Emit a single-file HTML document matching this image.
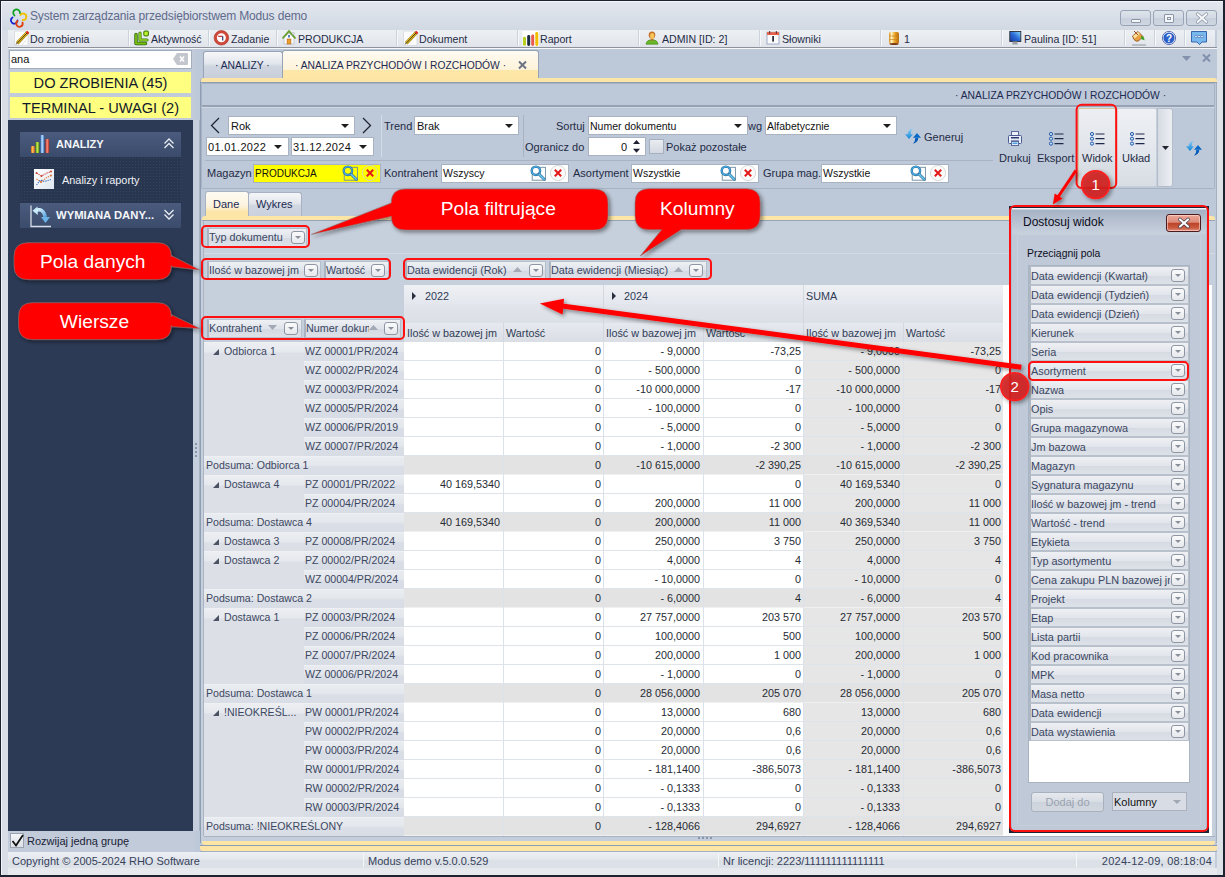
<!DOCTYPE html>
<html><head><meta charset="utf-8">
<style>
*{box-sizing:border-box;margin:0;padding:0}
html,body{width:1225px;height:877px;overflow:hidden}
body{position:relative;font-family:"Liberation Sans",sans-serif;font-size:11px;color:#1e2a3e;background:#c2ccda}
.a{position:absolute}
.t{position:absolute;white-space:nowrap;line-height:13px;height:13px}
svg{position:absolute;overflow:visible}
.sep{position:absolute;top:30px;width:2px;height:16px;border-left:1px solid #cdd3dc;border-right:1px solid #f7f8fa}
.wb{position:absolute;top:10px;width:31px;height:16px;border:1px solid #99a3b6;border-radius:3px;background:linear-gradient(#dde3ea 0,#d3dae4 50%,#c7d0dc 51%,#cfd7e2 100%)}
.inp{position:absolute;background:#fff;border:1px solid #a9b2c1}
.combo{position:absolute;background:#fff;border:1px solid #a9b2c1}
.combo .ar{position:absolute;right:9px;top:7px;width:0;height:0;border-left:4px solid transparent;border-right:4px solid transparent;border-top:4px solid #1e1e1e}
.lbl{position:absolute;white-space:nowrap;line-height:13px;color:#1f2b45}
.chip{position:absolute;height:19px;border:1px solid #b6bfcc;border-left:2px solid #a9b3c2;background:linear-gradient(#eef0f4,#dfe3ea 50%,#d4d9e2 51%,#dde1e8);color:#3b4762}
.dd{position:absolute;width:14px;height:13px;border:1px solid #8e96a3;border-radius:3px;background:linear-gradient(#fbfbfc,#e6e8ec)}
.dd:after{content:"";position:absolute;left:3px;top:4px;border-left:3px solid transparent;border-right:3px solid transparent;border-top:3px solid #8a909a}
.rbox{position:absolute;border:2px solid #ff1010;border-radius:5px}
</style></head>
<body>
<!-- title bar -->
<div class="a" style="left:0;top:0;width:1225px;height:30px;background:linear-gradient(#e3e7ee,#d2d9e3)"></div>
<svg style="left:10px;top:10px" width="17" height="17" viewBox="0 0 17 17"><g fill="none" stroke-width="1.8" stroke-linecap="round"><path d="M4.5 5.5 A3.4 3.4 0 1 1 10 3.2" stroke="#10a020"/><path d="M10.5 5 A3.2 3.2 0 1 1 12.8 10" stroke="#f0c000"/><path d="M2.5 7.5 A3.3 3.3 0 1 0 7.5 10.5" stroke="#1020d0"/><path d="M7.5 11 A3.2 3.2 0 1 0 12.5 12.5" stroke="#e04010"/></g></svg>
<div class="t" style="left:30px;top:9.5px;font-size:12px;letter-spacing:-0.15px;color:#5f6a8c">System zarządzania przedsiębiorstwem Modus demo</div>
<div class="wb" style="left:1120px"><div class="a" style="left:10px;top:8px;width:10px;height:4px;background:#f4f6f8;border:1px solid #8b95a8;border-radius:1px"></div></div>
<div class="wb" style="left:1153px"><div class="a" style="left:10px;top:3px;width:10px;height:9px;background:#f4f6f8;border:1px solid #8b95a8;border-radius:1px"><div class="a" style="left:2px;top:2px;width:4px;height:3px;border:1px solid #8b95a8"></div></div></div>
<div class="wb" style="left:1186px"><svg style="left:9px;top:2px" width="12" height="10" viewBox="0 0 12 10"><path d="M1.5 1 L10.5 9 M10.5 1 L1.5 9" stroke="#8a93a6" stroke-width="3.2" stroke-linecap="round"/><path d="M1.5 1 L10.5 9 M10.5 1 L1.5 9" stroke="#fafbfc" stroke-width="1.8" stroke-linecap="round"/></svg></div>
<!-- toolbar -->
<div class="a" style="left:8px;top:30px;width:1207px;height:17px;background:linear-gradient(#edf0f3,#e1e5eb)"></div>
<div class="a" style="left:8px;top:47px;width:1209px;height:1px;background:#8e939b"></div>
<div class="a" style="left:8px;top:48px;width:1209px;height:1px;background:#f6f7f9"></div>
<div class="sep" style="left:128px"></div>
<div class="sep" style="left:208px"></div>
<div class="sep" style="left:276px"></div>
<div class="sep" style="left:396px"></div>
<div class="sep" style="left:517px"></div>
<div class="sep" style="left:638px"></div>
<div class="sep" style="left:759px"></div>
<div class="sep" style="left:880px"></div>
<div class="sep" style="left:1001px"></div>
<div class="sep" style="left:1124px"></div>
<div class="sep" style="left:1154px"></div>
<div class="sep" style="left:1184px"></div>
<!-- toolbar icons -->
<svg style="left:14px;top:30px" width="16" height="16" viewBox="0 0 16 16"><path d="M0.5 1 H11 L14 4 V15.5 H0.5 Z" fill="#fbfbfc" stroke="#d4d8de" stroke-width=".8"/><path d="M3.2 13.2 L13.6 2.4" stroke="#8a6a00" stroke-width="3.4"/><path d="M3.2 13.2 L13.6 2.4" stroke="#f4c820" stroke-width="2.4"/><path d="M3.4 13 L13.4 2.6" stroke="#1e1e1e" stroke-width=".9"/><path d="M12.6 1.6 L14.6 3.4" stroke="#e02020" stroke-width="2"/><path d="M2 14.5 L3.8 12.2" stroke="#555" stroke-width="1"/><path d="M8 15 L12 10.5" stroke="#bbb" stroke-width=".7" stroke-dasharray="1 1"/></svg>
<div class="t" style="left:30px;top:33px;font-size:10.6px;color:#1f2b47">Do zrobienia</div>
<svg style="left:134px;top:30px" width="16" height="16" viewBox="0 0 16 16"><path d="M2 4.5 V13.5 H11.5" fill="none" stroke="#2a6010" stroke-width="3.4" stroke-linecap="round" stroke-linejoin="round"/><path d="M2 4.5 V13.5 H11.5" fill="none" stroke="#7cc010" stroke-width="1.8" stroke-linecap="round" stroke-linejoin="round"/><path d="M6 3 V10 H13" fill="none" stroke="#3a7a10" stroke-width="3.2" stroke-linecap="round" stroke-linejoin="round"/><path d="M6 3 V10 H13" fill="none" stroke="#98d820" stroke-width="1.7" stroke-linecap="round" stroke-linejoin="round"/><rect x="9.8" y="1.2" width="4.6" height="4.6" rx="1.2" fill="#c0f028" stroke="#4a8a10" stroke-width="1.2"/></svg>
<div class="t" style="left:151px;top:33px;font-size:10.6px;color:#1f2b47">Aktywność</div>
<svg style="left:214px;top:30px" width="16" height="16" viewBox="0 0 16 16"><circle cx="7.4" cy="7.8" r="5.9" fill="#fff" stroke="#d0483a" stroke-width="2.8"/><circle cx="7.4" cy="7.8" r="7.3" fill="none" stroke="#a83020" stroke-width=".6"/><path d="M4.2 6.3 H8.7" stroke="#c02020" stroke-width="1.1"/><path d="M8.7 6.3 V10.5" stroke="#2a3a6a" stroke-width="1.2"/></svg>
<div class="t" style="left:231px;top:33px;font-size:10.6px;color:#1f2b47">Zadanie</div>
<svg style="left:282px;top:30px" width="16" height="16" viewBox="0 0 16 16"><path d="M2 7.5 L7 3 L12 7.5 V14 H2 Z" fill="#fbfcfe" stroke="#b8c0cc" stroke-width=".8"/><path d="M1 7.8 L7 1.2 L13 7.8" fill="none" stroke="#6aa030" stroke-width="1.8" stroke-linecap="round"/><circle cx="11.3" cy="3.5" r="1.1" fill="#e4e8ec" stroke="#a0a8b0" stroke-width=".5"/><rect x="5.1" y="9" width="3.8" height="5" fill="#eca030" stroke="#b86010" stroke-width=".6"/><rect x="6" y="5" width="2" height="2.5" fill="#5a80c0"/></svg>
<div class="t" style="left:298px;top:33px;font-size:10.6px;color:#1f2b47">PRODUKCJA</div>
<svg style="left:403px;top:30px" width="16" height="16" viewBox="0 0 16 16"><path d="M0.5 1 H11 L14 4 V15.5 H0.5 Z" fill="#fbfbfc" stroke="#d4d8de" stroke-width=".8"/><path d="M3.2 13.2 L13.6 2.4" stroke="#8a6a00" stroke-width="3.4"/><path d="M3.2 13.2 L13.6 2.4" stroke="#f4c820" stroke-width="2.4"/><path d="M3.4 13 L13.4 2.6" stroke="#1e1e1e" stroke-width=".9"/><path d="M12.6 1.6 L14.6 3.4" stroke="#e02020" stroke-width="2"/><path d="M2 14.5 L3.8 12.2" stroke="#555" stroke-width="1"/></svg>
<div class="t" style="left:419px;top:33px;font-size:10.6px;color:#1f2b47">Dokument</div>
<svg style="left:522px;top:30px" width="17" height="16" viewBox="0 0 17 16"><rect x="0.5" y="1" width="16.5" height="15" fill="#fff"/><rect x="1" y="6.8" width="3" height="9" rx="1.4" fill="#b8d020"/><rect x="5.2" y="5" width="3" height="11" rx="1.4" fill="#1a2a40"/><rect x="9.2" y="4.5" width="3" height="11.5" rx="1.4" fill="#e85a50"/><rect x="13.3" y="2" width="3" height="14" rx="1.4" fill="#f0c000"/></svg>
<div class="t" style="left:540px;top:33px;font-size:10.6px;color:#1f2b47">Raport</div>
<svg style="left:645px;top:30px" width="14" height="16" viewBox="0 0 14 16"><path d="M1 14.2 Q1.5 9.8 7 9.8 Q12.5 9.8 13 14.2 Z" fill="#6ab828" stroke="#3a8010" stroke-width=".6"/><rect x="5.8" y="8" width="2.6" height="2.5" fill="#c07830"/><ellipse cx="7" cy="5" rx="3.3" ry="3.6" fill="#c47028"/><ellipse cx="7.2" cy="6" rx="2.1" ry="2.9" fill="#f8c458"/></svg>
<div class="t" style="left:662px;top:33px;font-size:10.6px;color:#1f2b47">ADMIN [ID: 2]</div>
<svg style="left:766px;top:30px" width="15" height="16" viewBox="0 0 15 16"><rect x="1" y="2.2" width="12" height="11.8" fill="#fafbfd" stroke="#8a9ab8" stroke-width=".8"/><rect x="1" y="2.2" width="12" height="2.8" fill="#e8604a"/><rect x="3" y="1.2" width="1.2" height="2.5" fill="#6a3030"/><rect x="9.8" y="1.2" width="1.2" height="2.5" fill="#6a3030"/><rect x="6.2" y="6" width="1.8" height="5.6" fill="#2a3040"/></svg>
<div class="t" style="left:782px;top:33px;font-size:10.6px;color:#1f2b47">Słowniki</div>
<svg style="left:888px;top:30px" width="12" height="16" viewBox="0 0 12 16"><defs><linearGradient id="gold" x1="0" x2="1"><stop offset="0" stop-color="#d88a18"/><stop offset=".25" stop-color="#fff4c0"/><stop offset=".6" stop-color="#e8a020"/><stop offset="1" stop-color="#b86a10"/></linearGradient></defs><rect x="1" y="2" width="10" height="12" rx="2" fill="url(#gold)"/><path d="M1.5 6 H10.5 M1.5 9.5 H10.5" stroke="#c07a18" stroke-width=".6"/><ellipse cx="6" cy="14" rx="4.5" ry="1" fill="#7a3a10"/></svg>
<div class="t" style="left:904px;top:33px;font-size:10.6px;color:#1f2b47">1</div>
<svg style="left:1009px;top:30px" width="13" height="16" viewBox="0 0 13 16"><defs><linearGradient id="scr" x1="0" y1="1" x2="1" y2="0"><stop offset="0" stop-color="#1a3aa0"/><stop offset=".5" stop-color="#2a6ad8"/><stop offset="1" stop-color="#8adcff"/></linearGradient></defs><rect x="0.8" y="1.5" width="11" height="10" fill="url(#scr)" stroke="#2a2e38" stroke-width=".9"/><path d="M4 11.5 L3 14.5 H9 L8 11.5 Z" fill="#9aa0a8"/></svg>
<div class="t" style="left:1024px;top:33px;font-size:10.6px;color:#1f2b47">Paulina [ID: 51]</div>
<svg style="left:1131px;top:30px" width="16" height="16" viewBox="0 0 16 16"><path d="M1.5 6 L7 1.5 L12 6.5 L7.5 11 Q5 12 3 9.5 Z" fill="#e8a040" stroke="#8a4a10" stroke-width=".8"/><path d="M2 6 L7 2 L9 4 L3.5 8.5 Z" fill="#fce0a0"/><path d="M3 1 L7 5" stroke="#8a3010" stroke-width=".9"/><path d="M10 6 Q13.5 6 13.5 10.5 Q12 9 10.5 9.5 Z" fill="#3aa020"/><rect x="1" y="14" width="14" height="2" fill="#b8bec6"/></svg>
<svg style="left:1162px;top:31px" width="14" height="14" viewBox="0 0 14 14"><circle cx="7" cy="7" r="6.6" fill="#fff" stroke="#3a50a0" stroke-width=".8"/><circle cx="7" cy="7" r="5.6" fill="#2a60c8"/><text x="7" y="11" font-size="10" font-weight="bold" fill="#fff" text-anchor="middle" font-family="Liberation Sans">?</text></svg>
<svg style="left:1191px;top:31px" width="16" height="14" viewBox="0 0 16 14"><path d="M0.5 0.5 H15.5 V11 H11 L8.5 13.6 L6 11 H0.5 Z" fill="#78b8ec" stroke="#2a5aa8" stroke-width=".9"/><g fill="#fff" stroke="#2a5aa8" stroke-width=".6"><circle cx="5" cy="5.5" r="1.2"/><circle cx="8" cy="5.5" r="1.2"/><circle cx="11" cy="5.5" r="1.2"/></g></svg>
<!-- status bar -->
<div class="a" style="left:8px;top:852px;width:1207px;height:16px;background:linear-gradient(#eceff3,#e4e8ed 45%,#dbe0e7 55%,#dde1e8)"></div>
<div class="a" style="left:0;top:868px;width:1225px;height:9px;background:#e6e9ee"></div>
<div class="a" style="left:363px;top:853px;width:1px;height:14px;background:#cdd3dc;border-right:1px solid #f4f6f8"></div>
<div class="a" style="left:718px;top:853px;width:1px;height:14px;background:#cdd3dc;border-right:1px solid #f4f6f8"></div>
<div class="a" style="left:1076px;top:853px;width:1px;height:14px;background:#cdd3dc;border-right:1px solid #f4f6f8"></div>
<div class="t" style="left:12px;top:855px;color:#36415c">Copyright © 2005-2024 RHO Software</div>
<div class="t" style="left:368px;top:855px;color:#36415c">Modus demo v.5.0.0.529</div>
<div class="t" style="left:723px;top:855px;color:#36415c">Nr licencji: 2223/111111111111111</div>
<div class="t" style="left:1100px;top:855px;width:112px;text-align:right;letter-spacing:.25px;color:#36415c">2024-12-09,  08:18:04</div>
<!-- frame sides -->
<div class="a" style="left:0;top:30px;width:8px;height:847px;background:#d9dee6"></div>
<div class="a" style="left:1217px;top:30px;width:8px;height:847px;background:#dde2e9"></div>
<div class="a" style="left:0;top:0;width:1225px;height:877px;border:1px solid #1d2230;border-right-width:2px;border-bottom-width:2px"></div><div class="a" style="left:1px;top:1px;width:1222px;height:1px;background:#f4f6f9"></div><div class="a" style="left:1px;top:1px;width:1px;height:874px;background:#f4f6f9"></div>
<!-- left panel -->
<div class="a" style="left:8px;top:49px;width:187px;height:803px;background:#c1cbd9"></div>
<div class="inp" style="left:9px;top:50px;width:183px;height:19px;border-color:#a4adbb"></div>
<div class="t" style="left:11px;top:53px;font-size:11px;color:#111">ana</div>
<svg style="left:173px;top:53px" width="15" height="12" viewBox="0 0 15 12"><path d="M4 0 H14 Q15 0 15 1 V11 Q15 12 14 12 H4 L0 6 Z" fill="#c3c6cc"/><path d="M7 3.5 L11 8.5 M11 3.5 L7 8.5" stroke="#fff" stroke-width="1.5"/></svg>
<div class="a" style="left:10px;top:72px;width:181px;height:21px;background:#ffff80"></div>
<div class="t" style="left:10px;top:75px;width:181px;text-align:center;font-size:14.6px;line-height:16px;height:16px;color:#111a2a">DO ZROBIENIA (45)</div>
<div class="a" style="left:10px;top:97px;width:181px;height:21px;background:#ffff80"></div>
<div class="t" style="left:10px;top:100px;width:181px;text-align:center;font-size:14.6px;line-height:16px;height:16px;color:#111a2a">TERMINAL - UWAGI (2)</div>
<div class="a" style="left:8px;top:120px;width:185px;height:711px;background:#2c3a55"></div>
<!-- ANALIZY header -->
<div class="a" style="left:20px;top:132px;width:161px;height:25px;background:linear-gradient(#4a5b7e,#3b4b6b)"></div>
<svg style="left:30px;top:135px" width="21" height="18" viewBox="0 0 21 18"><defs><linearGradient id="b1" x1="0" x2="1"><stop offset="0" stop-color="#d86810"/><stop offset=".45" stop-color="#ffc060"/><stop offset="1" stop-color="#d06010"/></linearGradient><linearGradient id="b2" x1="0" x2="1"><stop offset="0" stop-color="#5a9010"/><stop offset=".45" stop-color="#c8f050"/><stop offset="1" stop-color="#4a8010"/></linearGradient><linearGradient id="b3" x1="0" x2="1"><stop offset="0" stop-color="#3a70c0"/><stop offset=".45" stop-color="#c0e4ff"/><stop offset="1" stop-color="#3a70c0"/></linearGradient><linearGradient id="b4" x1="0" x2="1"><stop offset="0" stop-color="#b02a1a"/><stop offset=".45" stop-color="#ff9080"/><stop offset="1" stop-color="#b02a1a"/></linearGradient></defs><rect x="1" y="11" width="3.8" height="7" rx="1" fill="url(#b1)"/><rect x="5.6" y="7" width="3.8" height="11" rx="1" fill="url(#b2)"/><rect x="10.4" y="0" width="3.8" height="18" rx="1" fill="url(#b3)"/><rect x="15.4" y="4" width="3.8" height="14" rx="1" fill="url(#b4)"/></svg>
<div class="t" style="left:56px;top:138px;font-size:11px;font-weight:bold;color:#f4f6fa">ANALIZY</div>
<svg style="left:164px;top:138px" width="10" height="11" viewBox="0 0 10 11"><path d="M0.5 5.5 L5 1 L9.5 5.5 M0.5 10 L5 5.5 L9.5 10" fill="none" stroke="#e8ecf2" stroke-width="1.25"/></svg>
<div class="a" style="left:20px;top:157px;width:161px;height:46px;background-color:#29364f;background-image:radial-gradient(circle at 1.5px 1.5px,#36445f 0.6px,transparent 0.9px);background-size:3px 3px"></div>
<svg style="left:34px;top:169px" width="20" height="20" viewBox="0 0 20 20"><defs><linearGradient id="cb" x1="0" y1="0" x2="1" y2="1"><stop offset="0" stop-color="#ffffff"/><stop offset="1" stop-color="#dfe6f0"/></linearGradient></defs><rect x="0" y="0" width="20" height="20" fill="url(#cb)"/><g fill="none" stroke-width="1.1" stroke-dasharray="1.3 1"><path d="M2.5 4 L7.5 7 L12 4.5 L17 2.5" stroke="#d04030"/><path d="M2.5 10 L7 13 L12 9 L17 6.5" stroke="#e07030"/><path d="M2.5 16 L6.5 11 L10.5 12.5 L17 10.5" stroke="#3a70c8"/></g><g fill="#d04030"><circle cx="2.5" cy="4" r="1"/><circle cx="7.5" cy="7" r="1"/><circle cx="17" cy="2.5" r="1"/></g><g fill="#e07030"><circle cx="7" cy="13" r="1"/><circle cx="17" cy="6.5" r="1"/></g></svg>
<div class="t" style="left:62px;top:174px;font-size:10.9px;color:#eef1f6">Analizy i raporty</div>
<!-- WYMIANA header -->
<div class="a" style="left:20px;top:203px;width:161px;height:25px;background:linear-gradient(#4a5b7e,#3b4b6b)"></div>
<svg style="left:30px;top:205px" width="22" height="23" viewBox="0 0 22 23"><defs><linearGradient id="wa" x1="0" y1="0" x2="1" y2="1"><stop offset="0" stop-color="#e0f6ff"/><stop offset="1" stop-color="#5aa8e0"/></linearGradient></defs><path d="M1 0.5 V21.5 H21" fill="none" stroke="#d8dee8" stroke-width="1.3"/><path d="M6 5.5 Q13 2.5 15.3 12" fill="none" stroke="url(#wa)" stroke-width="3.6"/><path d="M2.5 5.8 L7.5 1.5 L7.8 10 Z" fill="#c8ecfa"/><path d="M11 12 L20 12 L15.5 18 Z" fill="#6ab4e8"/></svg>
<div class="t" style="left:56px;top:209px;font-size:11.3px;font-weight:bold;color:#f4f6fa">WYMIANA DANY...</div>
<svg style="left:164px;top:209px" width="10" height="11" viewBox="0 0 10 11"><path d="M0.5 1 L5 5.5 L9.5 1 M0.5 5.5 L5 10 L9.5 5.5" fill="none" stroke="#e8ecf2" stroke-width="1.25"/></svg>
<!-- checkbox -->
<div class="a" style="left:10px;top:833px;width:14px;height:15px;background:linear-gradient(#f4f5f7,#dde1e7);border:1px solid #9aa2af"></div>
<svg style="left:11px;top:834px" width="13" height="13" viewBox="0 0 13 13"><path d="M1.5 7 L5 11.5 L12 1" fill="none" stroke="#111" stroke-width="1.8"/></svg>
<div class="t" style="left:27px;top:835px;color:#1a2236">Rozwijaj jedną grupę</div>
<!-- main tabs -->
<div class="a" style="left:195px;top:49px;width:1022px;height:803px;background:#bdc8d8"></div>
<div class="a" style="left:193px;top:120px;width:7px;height:711px;background:#c4cedc;border-right:1px solid #a7b2c3"></div>
<div class="a" style="left:203px;top:51px;width:80px;height:27px;border:1px solid #97a3b5;border-bottom:none;border-radius:3px 3px 0 0;background:linear-gradient(#f6f7f9,#e2e6ec 45%,#cfd6e0 55%,#c8cfdb)"></div>
<div class="t" style="left:215px;top:58.5px;font-size:10.3px;color:#1c2a52">· ANALIZY ·</div>
<div class="a" style="left:282px;top:50px;width:257px;height:32px;border:1px solid #97a3b5;border-bottom:none;border-radius:3px 3px 0 0;background:linear-gradient(#fffbf1,#fdf3da 60%,#fde7a8 62%,#fde6a5)"></div>
<div class="t" style="left:295px;top:58.5px;font-size:10.3px;color:#1c2a52">· ANALIZA PRZYCHODÓW I ROZCHODÓW ·</div>
<svg style="left:518px;top:61px" width="9" height="8" viewBox="0 0 9 8"><path d="M1 0.5 L8 7.5 M8 0.5 L1 7.5" stroke="#6a7283" stroke-width="2"/></svg>
<svg style="left:1182px;top:56px" width="9" height="5" viewBox="0 0 9 5"><path d="M0 0 H9 L4.5 5 Z" fill="#8391ad"/></svg>
<svg style="left:1202px;top:54px" width="9" height="8" viewBox="0 0 9 8"><path d="M1 0.5 L8 7.5 M8 0.5 L1 7.5" stroke="#8391ad" stroke-width="2"/></svg>
<!-- main frame -->
<div class="a" style="left:200px;top:78px;width:1017px;height:5px;background:#fde6a5;border-radius:3px 3px 0 0;border-left:1px solid #a3afc0"></div>
<div class="a" style="left:283px;top:78px;width:255px;height:4px;background:#fde6a5"></div>
<div class="a" style="left:200px;top:82px;width:1017px;height:1px;background:#8f9db3"></div>
<div class="a" style="left:200px;top:83px;width:1px;height:760px;background:#8f9db3"></div>
<div class="a" style="left:1216px;top:83px;width:1px;height:760px;background:#a5b0c1"></div>
<!-- header strip -->
<div class="a" style="left:201px;top:83px;width:1014px;height:24px;border:1px solid #a7b2c3;border-bottom:2px solid #97a3b4;border-radius:2px"></div>
<div class="t" style="left:955px;top:89px;font-size:10.3px;color:#1c2a52">· ANALIZA PRZYCHODÓW I ROZCHODÓW ·</div>
<!-- toolbar panel -->
<div class="a" style="left:201px;top:107px;width:1014px;height:82px;border:1px solid #a7b2c3;border-top:1px solid #cfd7e2;border-radius:2px"></div>
<div class="a" style="left:381px;top:115px;width:1px;height:42px;background:#a8b2c2;border-right:1px solid #d3dae4"></div>
<div class="a" style="left:523px;top:115px;width:1px;height:42px;background:#a8b2c2"></div>
<div class="a" style="left:205px;top:160px;width:788px;height:1px;background:#a8b2c2"></div>
<svg style="left:210px;top:117px" width="10" height="17" viewBox="0 0 10 17"><path d="M9 1 L1.5 8.5 L9 16" fill="none" stroke="#1e2430" stroke-width="1.3"/></svg>
<svg style="left:362px;top:117px" width="10" height="17" viewBox="0 0 10 17"><path d="M1 1 L8.5 8.5 L1 16" fill="none" stroke="#1e2430" stroke-width="1.3"/></svg>
<div class="combo" style="left:228px;top:116px;width:127px;height:19px"><div class="t" style="left:2px;top:3px;color:#111">Rok</div><div class="ar" style="right:5px"></div></div>
<div class="combo" style="left:206px;top:137px;width:83px;height:19px"><div class="t" style="left:1px;top:3px;color:#111;letter-spacing:.3px">01.01.2022</div><div class="ar" style="right:6px"></div></div>
<div class="combo" style="left:291px;top:137px;width:83px;height:19px"><div class="t" style="left:1px;top:3px;color:#111;letter-spacing:.3px">31.12.2024</div><div class="ar" style="right:6px"></div></div>
<div class="lbl" style="left:384px;top:120px">Trend</div>
<div class="combo" style="left:414px;top:116px;width:105px;height:19px"><div class="t" style="left:2px;top:3px;color:#111">Brak</div><div class="ar" style="right:5px"></div></div>
<div class="lbl" style="left:556px;top:120px">Sortuj</div>
<div class="combo" style="left:588px;top:116px;width:160px;height:19px"><div class="t" style="left:1px;top:3px;font-size:10.5px;color:#111">Numer dokumentu</div><div class="ar" style="right:5px"></div></div>
<div class="lbl" style="left:748px;top:120px">wg</div>
<div class="combo" style="left:765px;top:116px;width:132px;height:19px"><div class="t" style="left:1px;top:3px;font-size:10.5px;color:#111">Alfabetycznie</div><div class="ar" style="right:5px"></div></div>
<div class="lbl" style="left:525px;top:141px">Ogranicz do</div>
<div class="inp" style="left:588px;top:137px;width:58px;height:19px"><div class="t" style="left:32px;top:3px;color:#111">0</div></div>
<svg style="left:633px;top:140px" width="7" height="13" viewBox="0 0 7 13"><path d="M0 4 L3.5 0 L7 4 Z M0 8.7 L3.5 12.8 L7 8.7 Z" fill="#1e2030"/></svg>
<div class="a" style="left:649px;top:139px;width:15px;height:15px;border:1px solid #a6afbd;background:linear-gradient(#e9ecf1,#d3d9e2)"></div>
<div class="lbl" style="left:666px;top:141px">Pokaż pozostałe</div>
<svg style="left:905px;top:128px" width="16" height="16" viewBox="0 0 16 16"><defs><linearGradient id="ga905" x1="0" y1="0" x2="0" y2="1"><stop offset="0" stop-color="#9ad2f4"/><stop offset="1" stop-color="#0a84d8"/></linearGradient><linearGradient id="gb905" x1="0" y1="0" x2="0" y2="1"><stop offset="0" stop-color="#0a72d0"/><stop offset="1" stop-color="#0050b0"/></linearGradient></defs><path d="M0 6.3 H8 L4 11 Z M2.6 6.5 Q2.8 1.5 8 0.3 Q5.4 2.8 5.8 6.5 Z" fill="url(#ga905)"/><path d="M8 9.7 H16 L12 5 Z M10.3 9.5 H13.4 Q13.2 14.5 8 15.7 Q10.6 13.2 10.3 9.5 Z" fill="url(#gb905)"/></svg>
<div class="lbl" style="left:924px;top:131px">Generuj</div>
<!-- filters row -->
<div class="lbl" style="left:207px;top:167px">Magazyn</div>
<div class="inp" style="left:253px;top:164px;width:128px;height:19px;background:#ffff00"><div class="t" style="left:1px;top:2px;font-size:10px;color:#111">PRODUKCJA</div></div>
<div class="lbl" style="left:384px;top:167px">Kontrahent</div>
<div class="inp" style="left:441px;top:164px;width:128px;height:19px"><div class="t" style="left:1px;top:2px;font-size:10.5px;color:#111">Wszyscy</div></div>
<div class="lbl" style="left:573px;top:167px">Asortyment</div>
<div class="inp" style="left:631px;top:164px;width:128px;height:19px"><div class="t" style="left:1px;top:2px;font-size:10.5px;color:#111">Wszystkie</div></div>
<div class="lbl" style="left:763px;top:167px">Grupa mag.</div>
<div class="inp" style="left:821px;top:164px;width:128px;height:19px"><div class="t" style="left:1px;top:2px;font-size:10.5px;color:#111">Wszystkie</div></div>
<svg style="left:343px;top:166px" width="17" height="16" viewBox="0 0 17 16"><rect x="1.2" y="1.3" width="13.2" height="12.9" fill="none" stroke="#6a8aa0" stroke-width=".9"/><circle cx="4.9" cy="4.8" r="4.2" fill="none" stroke="#2a6a98" stroke-width="2.4"/><circle cx="4.9" cy="4.8" r="4.2" fill="none" stroke="#4ab0e8" stroke-width="1.2"/><path d="M8.2 8.2 L13.2 13.2" stroke="#2a6a98" stroke-width="2.8" stroke-linecap="round"/><path d="M8.2 8.2 L13.2 13.2" stroke="#6ad0f8" stroke-width="1.4" stroke-linecap="round"/></svg>
<svg style="left:362px;top:165px" width="17" height="17" viewBox="0 0 17 17"><circle cx="8" cy="8" r="7.6" fill="none" stroke="#cfcfcf" stroke-width=".8"/><path d="M4.8 4.8 L11.2 11.2 M11.2 4.8 L4.8 11.2" stroke="#e41818" stroke-width="2"/></svg>
<svg style="left:531px;top:166px" width="17" height="16" viewBox="0 0 17 16"><rect x="1.2" y="1.3" width="13.2" height="12.9" fill="none" stroke="#6a8aa0" stroke-width=".9"/><circle cx="4.9" cy="4.8" r="4.2" fill="none" stroke="#2a6a98" stroke-width="2.4"/><circle cx="4.9" cy="4.8" r="4.2" fill="none" stroke="#4ab0e8" stroke-width="1.2"/><path d="M8.2 8.2 L13.2 13.2" stroke="#2a6a98" stroke-width="2.8" stroke-linecap="round"/><path d="M8.2 8.2 L13.2 13.2" stroke="#6ad0f8" stroke-width="1.4" stroke-linecap="round"/></svg>
<svg style="left:550px;top:165px" width="17" height="17" viewBox="0 0 17 17"><circle cx="8" cy="8" r="7.6" fill="#fafafa" stroke="#cfcfcf" stroke-width=".8"/><path d="M4.8 4.8 L11.2 11.2 M11.2 4.8 L4.8 11.2" stroke="#e41818" stroke-width="2"/></svg>
<svg style="left:721px;top:166px" width="17" height="16" viewBox="0 0 17 16"><rect x="1.2" y="1.3" width="13.2" height="12.9" fill="none" stroke="#6a8aa0" stroke-width=".9"/><circle cx="4.9" cy="4.8" r="4.2" fill="none" stroke="#2a6a98" stroke-width="2.4"/><circle cx="4.9" cy="4.8" r="4.2" fill="none" stroke="#4ab0e8" stroke-width="1.2"/><path d="M8.2 8.2 L13.2 13.2" stroke="#2a6a98" stroke-width="2.8" stroke-linecap="round"/><path d="M8.2 8.2 L13.2 13.2" stroke="#6ad0f8" stroke-width="1.4" stroke-linecap="round"/></svg>
<svg style="left:740px;top:165px" width="17" height="17" viewBox="0 0 17 17"><circle cx="8" cy="8" r="7.6" fill="#fafafa" stroke="#cfcfcf" stroke-width=".8"/><path d="M4.8 4.8 L11.2 11.2 M11.2 4.8 L4.8 11.2" stroke="#e41818" stroke-width="2"/></svg>
<svg style="left:911px;top:166px" width="17" height="16" viewBox="0 0 17 16"><rect x="1.2" y="1.3" width="13.2" height="12.9" fill="none" stroke="#6a8aa0" stroke-width=".9"/><circle cx="4.9" cy="4.8" r="4.2" fill="none" stroke="#2a6a98" stroke-width="2.4"/><circle cx="4.9" cy="4.8" r="4.2" fill="none" stroke="#4ab0e8" stroke-width="1.2"/><path d="M8.2 8.2 L13.2 13.2" stroke="#2a6a98" stroke-width="2.8" stroke-linecap="round"/><path d="M8.2 8.2 L13.2 13.2" stroke="#6ad0f8" stroke-width="1.4" stroke-linecap="round"/></svg>
<svg style="left:930px;top:165px" width="17" height="17" viewBox="0 0 17 17"><circle cx="8" cy="8" r="7.6" fill="#fafafa" stroke="#cfcfcf" stroke-width=".8"/><path d="M4.8 4.8 L11.2 11.2 M11.2 4.8 L4.8 11.2" stroke="#e41818" stroke-width="2"/></svg>
<!-- right toolbar buttons -->
<div class="a" style="left:1078px;top:108px;width:38px;height:79px;border:1px solid #d6c9a0;border-radius:2px;background:linear-gradient(#eceef2,#e4e7ec 40%,#d2d8e0 100%)"></div>
<div class="a" style="left:1116px;top:108px;width:41px;height:79px;border:1px solid #c6ced9;border-radius:2px;background:linear-gradient(#eef0f4,#e4e8ee 50%,#d8dde5)"></div>
<div class="a" style="left:1157px;top:108px;width:16px;height:79px;border:1px solid #b4bdca;border-radius:0 3px 3px 0;background:linear-gradient(90deg,#d6dbe3,#eceef2)"></div>
<svg style="left:1162px;top:146px" width="7" height="4" viewBox="0 0 7 4"><path d="M0 0 H7 L3.5 4 Z" fill="#1e2430"/></svg>
<svg style="left:1008px;top:131px" width="14" height="15" viewBox="0 0 14 15"><rect x="3.5" y="0.5" width="7" height="7" fill="#eef2f8" stroke="#5a6aa0" stroke-width="1"/><rect x="0.5" y="4.5" width="13" height="8" rx="1" fill="#e8eef8" stroke="#4a5a90" stroke-width="1"/><rect x="3" y="6" width="8" height="1.5" fill="#2a3a70"/><rect x="3" y="9.5" width="8" height="1.5" fill="#2a3a70"/><rect x="3.5" y="10.5" width="7" height="4" fill="#f2f5fa" stroke="#5a6aa0" stroke-width="1"/><rect x="4.5" y="11.5" width="5" height="1.6" fill="#4aa0e0"/></svg>
<svg style="left:1049px;top:131px" width="15" height="15" viewBox="0 0 15 15"><g fill="#bfe4fa" stroke="#2a5aa8" stroke-width="1"><circle cx="2" cy="3" r="1.6"/><circle cx="2" cy="7.7" r="1.6"/><circle cx="2" cy="12.6" r="1.6"/></g><path d="M5.5 3 H14.5 M5.5 7.7 H14.5 M5.5 12.6 H14.5" stroke="#1e2848" stroke-width="1.2"/></svg>
<svg style="left:1090px;top:131px" width="15" height="15" viewBox="0 0 15 15"><g fill="#bfe4fa" stroke="#2a5aa8" stroke-width="1"><circle cx="2" cy="3" r="1.6"/><circle cx="2" cy="7.7" r="1.6"/><circle cx="2" cy="12.6" r="1.6"/></g><path d="M5.5 3 H14.5 M5.5 7.7 H14.5 M5.5 12.6 H14.5" stroke="#1e2848" stroke-width="1.2"/></svg>
<svg style="left:1130px;top:131px" width="15" height="15" viewBox="0 0 15 15"><g fill="#bfe4fa" stroke="#2a5aa8" stroke-width="1"><circle cx="2" cy="3" r="1.6"/><circle cx="2" cy="7.7" r="1.6"/><circle cx="2" cy="12.6" r="1.6"/></g><path d="M5.5 3 H14.5 M5.5 7.7 H14.5 M5.5 12.6 H14.5" stroke="#1e2848" stroke-width="1.2"/></svg>
<div class="lbl" style="left:999px;top:152px">Drukuj</div>
<div class="lbl" style="left:1037px;top:152px">Eksport</div>
<div class="lbl" style="left:1082px;top:152px">Widok</div>
<div class="lbl" style="left:1122px;top:152px">Układ</div>
<svg style="left:1186px;top:140px" width="16" height="16" viewBox="0 0 16 16"><defs><linearGradient id="ga1186" x1="0" y1="0" x2="0" y2="1"><stop offset="0" stop-color="#9ad2f4"/><stop offset="1" stop-color="#0a84d8"/></linearGradient><linearGradient id="gb1186" x1="0" y1="0" x2="0" y2="1"><stop offset="0" stop-color="#0a72d0"/><stop offset="1" stop-color="#0050b0"/></linearGradient></defs><path d="M0 6.3 H8 L4 11 Z M2.6 6.5 Q2.8 1.5 8 0.3 Q5.4 2.8 5.8 6.5 Z" fill="url(#ga1186)"/><path d="M8 9.7 H16 L12 5 Z M10.3 9.5 H13.4 Q13.2 14.5 8 15.7 Q10.6 13.2 10.3 9.5 Z" fill="url(#gb1186)"/></svg>
<!-- Dane / Wykres tabs -->
<div class="a" style="left:205px;top:191px;width:44px;height:29px;border:1px solid #a7b2c3;border-bottom:none;border-radius:3px 3px 0 0;background:linear-gradient(#fefbf3,#fcf3dd 50%,#fbe5a8 70%,#fde6a5)"></div>
<div class="t" style="left:213px;top:198px;color:#1c2a52">Dane</div>
<div class="a" style="left:248px;top:192px;width:54px;height:24px;border:1px solid #a7b2c3;border-bottom:none;border-radius:3px 3px 0 0;background:linear-gradient(#f5f6f8,#e2e6ec 45%,#d0d7e1 55%,#cbd2dd)"></div>
<div class="t" style="left:256px;top:198px;color:#1c2a52">Wykres</div>
<div class="a" style="left:202px;top:216px;width:1013px;height:4px;background:#fde6a5;border-radius:3px 3px 0 0"></div>
<div class="a" style="left:202px;top:220px;width:1013px;height:1px;background:#98a5b8"></div>
<!-- pivot grid -->
<div class="a" style="left:201px;top:221px;width:1014px;height:622px;background:#c6cfdc"></div>
<div class="a" style="left:203px;top:221px;width:1px;height:615px;background:#a9b3c3"></div>
<div class="a" style="left:204px;top:253px;width:1011px;height:1px;background:#d5dbe4"></div>
<div class="a" style="left:204px;top:836px;width:1011px;height:1px;background:#a9b3c3"></div>
<div class="a" style="left:404px;top:285px;width:605px;height:57px;background:#f6f7f9"></div>
<div class="a" style="left:404px;top:285px;width:599px;height:19px;background:linear-gradient(#eef0f4,#e4e7ed)"></div>
<div class="a" style="left:404px;top:304px;width:599px;height:19px;background:linear-gradient(#e2e5eb,#dbdfe6)"></div>
<div class="a" style="left:404px;top:323px;width:599px;height:19px;background:linear-gradient(#e6e9ee,#dadee5)"></div>
<div class="a" style="left:603px;top:285px;width:1px;height:57px;background:#d3d8e0"></div>
<div class="a" style="left:803px;top:285px;width:1px;height:57px;background:#d3d8e0"></div>
<div class="a" style="left:503px;top:323px;width:1px;height:19px;background:#d3d8e0"></div>
<div class="a" style="left:703px;top:323px;width:1px;height:19px;background:#d3d8e0"></div>
<div class="a" style="left:903px;top:323px;width:1px;height:19px;background:#d3d8e0"></div>
<svg style="left:412px;top:292px" width="4" height="8" viewBox="0 0 4 8"><path d="M0 0 L4 4 L0 8 Z" fill="#2a3040"/></svg>
<div class="t" style="left:425px;top:290px;font-size:10.8px;color:#2f3b55">2022</div>
<svg style="left:612px;top:292px" width="4" height="8" viewBox="0 0 4 8"><path d="M0 0 L4 4 L0 8 Z" fill="#2a3040"/></svg>
<div class="t" style="left:624px;top:290px;font-size:10.8px;color:#2f3b55">2024</div>
<div class="t" style="left:806px;top:290px;font-size:10.8px;color:#2f3b55">SUMA</div>
<div class="t" style="left:407px;top:327px;font-size:10.8px;color:#2f3b55">Ilość w bazowej jm</div>
<div class="t" style="left:506px;top:327px;font-size:10.8px;color:#2f3b55">Wartość</div>
<div class="t" style="left:606px;top:327px;font-size:10.8px;color:#2f3b55">Ilość w bazowej jm</div>
<div class="t" style="left:706px;top:327px;font-size:10.8px;color:#2f3b55">Wartość</div>
<div class="t" style="left:806px;top:327px;font-size:10.8px;color:#2f3b55">Ilość w bazowej jm</div>
<div class="t" style="left:906px;top:327px;font-size:10.8px;color:#2f3b55">Wartość</div>
<div class="a" style="left:1003px;top:285px;width:209px;height:551px;background:#fdfdfd"></div>
<div class="a" style="left:204px;top:342px;width:100px;height:114px;background:linear-gradient(#eceef2,#e5e8ed 9px,#dcdfe6 10px,#dcdfe6);border-top:1px solid #eef0f3"></div>
<div class="a" style="left:204px;top:475px;width:100px;height:38px;background:linear-gradient(#eceef2,#e5e8ed 9px,#dcdfe6 10px,#dcdfe6);border-top:1px solid #eef0f3"></div>
<div class="a" style="left:204px;top:532px;width:100px;height:19px;background:linear-gradient(#eceef2,#e5e8ed 9px,#dcdfe6 10px,#dcdfe6);border-top:1px solid #eef0f3"></div>
<div class="a" style="left:204px;top:551px;width:100px;height:38px;background:linear-gradient(#eceef2,#e5e8ed 9px,#dcdfe6 10px,#dcdfe6);border-top:1px solid #eef0f3"></div>
<div class="a" style="left:204px;top:608px;width:100px;height:76px;background:linear-gradient(#eceef2,#e5e8ed 9px,#dcdfe6 10px,#dcdfe6);border-top:1px solid #eef0f3"></div>
<div class="a" style="left:204px;top:703px;width:100px;height:114px;background:linear-gradient(#eceef2,#e5e8ed 9px,#dcdfe6 10px,#dcdfe6);border-top:1px solid #eef0f3"></div>
<div class="a" style="left:304px;top:342px;width:100px;height:19px;background:linear-gradient(#e8ebf0,#e3e6eb 45%,#d9dde5 55%,#d8dce4);border-top:1px solid #eef0f3"></div>
<div class="t" style="left:305px;top:345px;font-size:10.6px;color:#3c4762">WZ 00001/PR/2024</div>
<div class="a" style="left:404px;top:342px;width:400px;height:19px;background:#fff"></div>
<div class="a" style="left:803px;top:342px;width:200px;height:19px;background:#e6e6e6"></div>
<svg style="left:213px;top:349px" width="6" height="6" viewBox="0 0 6 6"><path d="M6 0 V6 H0 Z" fill="#4a5264"/></svg>
<div class="t" style="left:224px;top:345px;font-size:10.6px;color:#3c4762">Odbiorca 1</div>
<div class="t" style="left:504px;top:345px;width:97px;text-align:right;font-size:10.8px;color:#262b33">0</div>
<div class="t" style="left:604px;top:345px;width:96px;text-align:right;font-size:10.8px;color:#262b33">- 9,0000</div>
<div class="t" style="left:704px;top:345px;width:97px;text-align:right;font-size:10.8px;color:#262b33">-73,25</div>
<div class="t" style="left:804px;top:345px;width:96px;text-align:right;font-size:10.8px;color:#262b33">- 9,0000</div>
<div class="t" style="left:904px;top:345px;width:97px;text-align:right;font-size:10.8px;color:#262b33">-73,25</div>
<div class="a" style="left:304px;top:361px;width:100px;height:19px;background:linear-gradient(#e8ebf0,#e3e6eb 45%,#d9dde5 55%,#d8dce4);border-top:1px solid #eef0f3"></div>
<div class="t" style="left:305px;top:364px;font-size:10.6px;color:#3c4762">WZ 00002/PR/2024</div>
<div class="a" style="left:404px;top:361px;width:400px;height:19px;background:#fff"></div>
<div class="a" style="left:803px;top:361px;width:200px;height:19px;background:#e6e6e6"></div>
<div class="t" style="left:504px;top:364px;width:97px;text-align:right;font-size:10.8px;color:#262b33">0</div>
<div class="t" style="left:604px;top:364px;width:96px;text-align:right;font-size:10.8px;color:#262b33">- 500,0000</div>
<div class="t" style="left:704px;top:364px;width:97px;text-align:right;font-size:10.8px;color:#262b33">0</div>
<div class="t" style="left:804px;top:364px;width:96px;text-align:right;font-size:10.8px;color:#262b33">- 500,0000</div>
<div class="t" style="left:904px;top:364px;width:97px;text-align:right;font-size:10.8px;color:#262b33">0</div>
<div class="a" style="left:304px;top:380px;width:100px;height:19px;background:linear-gradient(#e8ebf0,#e3e6eb 45%,#d9dde5 55%,#d8dce4);border-top:1px solid #eef0f3"></div>
<div class="t" style="left:305px;top:383px;font-size:10.6px;color:#3c4762">WZ 00003/PR/2024</div>
<div class="a" style="left:404px;top:380px;width:400px;height:19px;background:#fff"></div>
<div class="a" style="left:803px;top:380px;width:200px;height:19px;background:#e6e6e6"></div>
<div class="t" style="left:504px;top:383px;width:97px;text-align:right;font-size:10.8px;color:#262b33">0</div>
<div class="t" style="left:604px;top:383px;width:96px;text-align:right;font-size:10.8px;color:#262b33">-10 000,0000</div>
<div class="t" style="left:704px;top:383px;width:97px;text-align:right;font-size:10.8px;color:#262b33">-17</div>
<div class="t" style="left:804px;top:383px;width:96px;text-align:right;font-size:10.8px;color:#262b33">-10 000,0000</div>
<div class="t" style="left:904px;top:383px;width:97px;text-align:right;font-size:10.8px;color:#262b33">-17</div>
<div class="a" style="left:304px;top:399px;width:100px;height:19px;background:linear-gradient(#e8ebf0,#e3e6eb 45%,#d9dde5 55%,#d8dce4);border-top:1px solid #eef0f3"></div>
<div class="t" style="left:305px;top:402px;font-size:10.6px;color:#3c4762">WZ 00005/PR/2024</div>
<div class="a" style="left:404px;top:399px;width:400px;height:19px;background:#fff"></div>
<div class="a" style="left:803px;top:399px;width:200px;height:19px;background:#e6e6e6"></div>
<div class="t" style="left:504px;top:402px;width:97px;text-align:right;font-size:10.8px;color:#262b33">0</div>
<div class="t" style="left:604px;top:402px;width:96px;text-align:right;font-size:10.8px;color:#262b33">- 100,0000</div>
<div class="t" style="left:704px;top:402px;width:97px;text-align:right;font-size:10.8px;color:#262b33">0</div>
<div class="t" style="left:804px;top:402px;width:96px;text-align:right;font-size:10.8px;color:#262b33">- 100,0000</div>
<div class="t" style="left:904px;top:402px;width:97px;text-align:right;font-size:10.8px;color:#262b33">0</div>
<div class="a" style="left:304px;top:418px;width:100px;height:19px;background:linear-gradient(#e8ebf0,#e3e6eb 45%,#d9dde5 55%,#d8dce4);border-top:1px solid #eef0f3"></div>
<div class="t" style="left:305px;top:421px;font-size:10.6px;color:#3c4762">WZ 00006/PR/2019</div>
<div class="a" style="left:404px;top:418px;width:400px;height:19px;background:#fff"></div>
<div class="a" style="left:803px;top:418px;width:200px;height:19px;background:#e6e6e6"></div>
<div class="t" style="left:504px;top:421px;width:97px;text-align:right;font-size:10.8px;color:#262b33">0</div>
<div class="t" style="left:604px;top:421px;width:96px;text-align:right;font-size:10.8px;color:#262b33">- 5,0000</div>
<div class="t" style="left:704px;top:421px;width:97px;text-align:right;font-size:10.8px;color:#262b33">0</div>
<div class="t" style="left:804px;top:421px;width:96px;text-align:right;font-size:10.8px;color:#262b33">- 5,0000</div>
<div class="t" style="left:904px;top:421px;width:97px;text-align:right;font-size:10.8px;color:#262b33">0</div>
<div class="a" style="left:304px;top:437px;width:100px;height:19px;background:linear-gradient(#e8ebf0,#e3e6eb 45%,#d9dde5 55%,#d8dce4);border-top:1px solid #eef0f3"></div>
<div class="t" style="left:305px;top:440px;font-size:10.6px;color:#3c4762">WZ 00007/PR/2024</div>
<div class="a" style="left:404px;top:437px;width:400px;height:19px;background:#fff"></div>
<div class="a" style="left:803px;top:437px;width:200px;height:19px;background:#e6e6e6"></div>
<div class="t" style="left:504px;top:440px;width:97px;text-align:right;font-size:10.8px;color:#262b33">0</div>
<div class="t" style="left:604px;top:440px;width:96px;text-align:right;font-size:10.8px;color:#262b33">- 1,0000</div>
<div class="t" style="left:704px;top:440px;width:97px;text-align:right;font-size:10.8px;color:#262b33">-2 300</div>
<div class="t" style="left:804px;top:440px;width:96px;text-align:right;font-size:10.8px;color:#262b33">- 1,0000</div>
<div class="t" style="left:904px;top:440px;width:97px;text-align:right;font-size:10.8px;color:#262b33">-2 300</div>
<div class="a" style="left:204px;top:456px;width:200px;height:19px;background:linear-gradient(#e9ecf0,#e4e7ec 45%,#dadee6 55%,#d9dde5);border-top:1px solid #eef0f3"></div>
<div class="t" style="left:206px;top:459px;font-size:10.6px;color:#3c4762">Podsuma: Odbiorca 1</div>
<div class="a" style="left:404px;top:456px;width:599px;height:19px;background:#e3e3e3"></div>
<div class="t" style="left:504px;top:459px;width:97px;text-align:right;font-size:10.8px;color:#262b33">0</div>
<div class="t" style="left:604px;top:459px;width:96px;text-align:right;font-size:10.8px;color:#262b33">-10 615,0000</div>
<div class="t" style="left:704px;top:459px;width:97px;text-align:right;font-size:10.8px;color:#262b33">-2 390,25</div>
<div class="t" style="left:804px;top:459px;width:96px;text-align:right;font-size:10.8px;color:#262b33">-10 615,0000</div>
<div class="t" style="left:904px;top:459px;width:97px;text-align:right;font-size:10.8px;color:#262b33">-2 390,25</div>
<div class="a" style="left:304px;top:475px;width:100px;height:19px;background:linear-gradient(#e8ebf0,#e3e6eb 45%,#d9dde5 55%,#d8dce4);border-top:1px solid #eef0f3"></div>
<div class="t" style="left:305px;top:478px;font-size:10.6px;color:#3c4762">PZ 00001/PR/2022</div>
<div class="a" style="left:404px;top:475px;width:400px;height:19px;background:#fff"></div>
<div class="a" style="left:803px;top:475px;width:200px;height:19px;background:#e6e6e6"></div>
<svg style="left:213px;top:482px" width="6" height="6" viewBox="0 0 6 6"><path d="M6 0 V6 H0 Z" fill="#4a5264"/></svg>
<div class="t" style="left:224px;top:478px;font-size:10.6px;color:#3c4762">Dostawca 4</div>
<div class="t" style="left:404px;top:478px;width:96px;text-align:right;font-size:10.8px;color:#262b33">40 169,5340</div>
<div class="t" style="left:504px;top:478px;width:97px;text-align:right;font-size:10.8px;color:#262b33">0</div>
<div class="t" style="left:704px;top:478px;width:97px;text-align:right;font-size:10.8px;color:#262b33">0</div>
<div class="t" style="left:804px;top:478px;width:96px;text-align:right;font-size:10.8px;color:#262b33">40 169,5340</div>
<div class="t" style="left:904px;top:478px;width:97px;text-align:right;font-size:10.8px;color:#262b33">0</div>
<div class="a" style="left:304px;top:494px;width:100px;height:19px;background:linear-gradient(#e8ebf0,#e3e6eb 45%,#d9dde5 55%,#d8dce4);border-top:1px solid #eef0f3"></div>
<div class="t" style="left:305px;top:497px;font-size:10.6px;color:#3c4762">PZ 00004/PR/2024</div>
<div class="a" style="left:404px;top:494px;width:400px;height:19px;background:#fff"></div>
<div class="a" style="left:803px;top:494px;width:200px;height:19px;background:#e6e6e6"></div>
<div class="t" style="left:504px;top:497px;width:97px;text-align:right;font-size:10.8px;color:#262b33">0</div>
<div class="t" style="left:604px;top:497px;width:96px;text-align:right;font-size:10.8px;color:#262b33">200,0000</div>
<div class="t" style="left:704px;top:497px;width:97px;text-align:right;font-size:10.8px;color:#262b33">11 000</div>
<div class="t" style="left:804px;top:497px;width:96px;text-align:right;font-size:10.8px;color:#262b33">200,0000</div>
<div class="t" style="left:904px;top:497px;width:97px;text-align:right;font-size:10.8px;color:#262b33">11 000</div>
<div class="a" style="left:204px;top:513px;width:200px;height:19px;background:linear-gradient(#e9ecf0,#e4e7ec 45%,#dadee6 55%,#d9dde5);border-top:1px solid #eef0f3"></div>
<div class="t" style="left:206px;top:516px;font-size:10.6px;color:#3c4762">Podsuma: Dostawca 4</div>
<div class="a" style="left:404px;top:513px;width:599px;height:19px;background:#e3e3e3"></div>
<div class="t" style="left:404px;top:516px;width:96px;text-align:right;font-size:10.8px;color:#262b33">40 169,5340</div>
<div class="t" style="left:504px;top:516px;width:97px;text-align:right;font-size:10.8px;color:#262b33">0</div>
<div class="t" style="left:604px;top:516px;width:96px;text-align:right;font-size:10.8px;color:#262b33">200,0000</div>
<div class="t" style="left:704px;top:516px;width:97px;text-align:right;font-size:10.8px;color:#262b33">11 000</div>
<div class="t" style="left:804px;top:516px;width:96px;text-align:right;font-size:10.8px;color:#262b33">40 369,5340</div>
<div class="t" style="left:904px;top:516px;width:97px;text-align:right;font-size:10.8px;color:#262b33">11 000</div>
<div class="a" style="left:304px;top:532px;width:100px;height:19px;background:linear-gradient(#e8ebf0,#e3e6eb 45%,#d9dde5 55%,#d8dce4);border-top:1px solid #eef0f3"></div>
<div class="t" style="left:305px;top:535px;font-size:10.6px;color:#3c4762">PZ 00008/PR/2024</div>
<div class="a" style="left:404px;top:532px;width:400px;height:19px;background:#fff"></div>
<div class="a" style="left:803px;top:532px;width:200px;height:19px;background:#e6e6e6"></div>
<svg style="left:213px;top:539px" width="6" height="6" viewBox="0 0 6 6"><path d="M6 0 V6 H0 Z" fill="#4a5264"/></svg>
<div class="t" style="left:224px;top:535px;font-size:10.6px;color:#3c4762">Dostawca 3</div>
<div class="t" style="left:504px;top:535px;width:97px;text-align:right;font-size:10.8px;color:#262b33">0</div>
<div class="t" style="left:604px;top:535px;width:96px;text-align:right;font-size:10.8px;color:#262b33">250,0000</div>
<div class="t" style="left:704px;top:535px;width:97px;text-align:right;font-size:10.8px;color:#262b33">3 750</div>
<div class="t" style="left:804px;top:535px;width:96px;text-align:right;font-size:10.8px;color:#262b33">250,0000</div>
<div class="t" style="left:904px;top:535px;width:97px;text-align:right;font-size:10.8px;color:#262b33">3 750</div>
<div class="a" style="left:304px;top:551px;width:100px;height:19px;background:linear-gradient(#e8ebf0,#e3e6eb 45%,#d9dde5 55%,#d8dce4);border-top:1px solid #eef0f3"></div>
<div class="t" style="left:305px;top:554px;font-size:10.6px;color:#3c4762">PZ 00002/PR/2024</div>
<div class="a" style="left:404px;top:551px;width:400px;height:19px;background:#fff"></div>
<div class="a" style="left:803px;top:551px;width:200px;height:19px;background:#e6e6e6"></div>
<svg style="left:213px;top:558px" width="6" height="6" viewBox="0 0 6 6"><path d="M6 0 V6 H0 Z" fill="#4a5264"/></svg>
<div class="t" style="left:224px;top:554px;font-size:10.6px;color:#3c4762">Dostawca 2</div>
<div class="t" style="left:504px;top:554px;width:97px;text-align:right;font-size:10.8px;color:#262b33">0</div>
<div class="t" style="left:604px;top:554px;width:96px;text-align:right;font-size:10.8px;color:#262b33">4,0000</div>
<div class="t" style="left:704px;top:554px;width:97px;text-align:right;font-size:10.8px;color:#262b33">4</div>
<div class="t" style="left:804px;top:554px;width:96px;text-align:right;font-size:10.8px;color:#262b33">4,0000</div>
<div class="t" style="left:904px;top:554px;width:97px;text-align:right;font-size:10.8px;color:#262b33">4</div>
<div class="a" style="left:304px;top:570px;width:100px;height:19px;background:linear-gradient(#e8ebf0,#e3e6eb 45%,#d9dde5 55%,#d8dce4);border-top:1px solid #eef0f3"></div>
<div class="t" style="left:305px;top:573px;font-size:10.6px;color:#3c4762">WZ 00004/PR/2024</div>
<div class="a" style="left:404px;top:570px;width:400px;height:19px;background:#fff"></div>
<div class="a" style="left:803px;top:570px;width:200px;height:19px;background:#e6e6e6"></div>
<div class="t" style="left:504px;top:573px;width:97px;text-align:right;font-size:10.8px;color:#262b33">0</div>
<div class="t" style="left:604px;top:573px;width:96px;text-align:right;font-size:10.8px;color:#262b33">- 10,0000</div>
<div class="t" style="left:704px;top:573px;width:97px;text-align:right;font-size:10.8px;color:#262b33">0</div>
<div class="t" style="left:804px;top:573px;width:96px;text-align:right;font-size:10.8px;color:#262b33">- 10,0000</div>
<div class="t" style="left:904px;top:573px;width:97px;text-align:right;font-size:10.8px;color:#262b33">0</div>
<div class="a" style="left:204px;top:589px;width:200px;height:19px;background:linear-gradient(#e9ecf0,#e4e7ec 45%,#dadee6 55%,#d9dde5);border-top:1px solid #eef0f3"></div>
<div class="t" style="left:206px;top:592px;font-size:10.6px;color:#3c4762">Podsuma: Dostawca 2</div>
<div class="a" style="left:404px;top:589px;width:599px;height:19px;background:#e3e3e3"></div>
<div class="t" style="left:504px;top:592px;width:97px;text-align:right;font-size:10.8px;color:#262b33">0</div>
<div class="t" style="left:604px;top:592px;width:96px;text-align:right;font-size:10.8px;color:#262b33">- 6,0000</div>
<div class="t" style="left:704px;top:592px;width:97px;text-align:right;font-size:10.8px;color:#262b33">4</div>
<div class="t" style="left:804px;top:592px;width:96px;text-align:right;font-size:10.8px;color:#262b33">- 6,0000</div>
<div class="t" style="left:904px;top:592px;width:97px;text-align:right;font-size:10.8px;color:#262b33">4</div>
<div class="a" style="left:304px;top:608px;width:100px;height:19px;background:linear-gradient(#e8ebf0,#e3e6eb 45%,#d9dde5 55%,#d8dce4);border-top:1px solid #eef0f3"></div>
<div class="t" style="left:305px;top:611px;font-size:10.6px;color:#3c4762">PZ 00003/PR/2024</div>
<div class="a" style="left:404px;top:608px;width:400px;height:19px;background:#fff"></div>
<div class="a" style="left:803px;top:608px;width:200px;height:19px;background:#e6e6e6"></div>
<svg style="left:213px;top:615px" width="6" height="6" viewBox="0 0 6 6"><path d="M6 0 V6 H0 Z" fill="#4a5264"/></svg>
<div class="t" style="left:224px;top:611px;font-size:10.6px;color:#3c4762">Dostawca 1</div>
<div class="t" style="left:504px;top:611px;width:97px;text-align:right;font-size:10.8px;color:#262b33">0</div>
<div class="t" style="left:604px;top:611px;width:96px;text-align:right;font-size:10.8px;color:#262b33">27 757,0000</div>
<div class="t" style="left:704px;top:611px;width:97px;text-align:right;font-size:10.8px;color:#262b33">203 570</div>
<div class="t" style="left:804px;top:611px;width:96px;text-align:right;font-size:10.8px;color:#262b33">27 757,0000</div>
<div class="t" style="left:904px;top:611px;width:97px;text-align:right;font-size:10.8px;color:#262b33">203 570</div>
<div class="a" style="left:304px;top:627px;width:100px;height:19px;background:linear-gradient(#e8ebf0,#e3e6eb 45%,#d9dde5 55%,#d8dce4);border-top:1px solid #eef0f3"></div>
<div class="t" style="left:305px;top:630px;font-size:10.6px;color:#3c4762">PZ 00006/PR/2024</div>
<div class="a" style="left:404px;top:627px;width:400px;height:19px;background:#fff"></div>
<div class="a" style="left:803px;top:627px;width:200px;height:19px;background:#e6e6e6"></div>
<div class="t" style="left:504px;top:630px;width:97px;text-align:right;font-size:10.8px;color:#262b33">0</div>
<div class="t" style="left:604px;top:630px;width:96px;text-align:right;font-size:10.8px;color:#262b33">100,0000</div>
<div class="t" style="left:704px;top:630px;width:97px;text-align:right;font-size:10.8px;color:#262b33">500</div>
<div class="t" style="left:804px;top:630px;width:96px;text-align:right;font-size:10.8px;color:#262b33">100,0000</div>
<div class="t" style="left:904px;top:630px;width:97px;text-align:right;font-size:10.8px;color:#262b33">500</div>
<div class="a" style="left:304px;top:646px;width:100px;height:19px;background:linear-gradient(#e8ebf0,#e3e6eb 45%,#d9dde5 55%,#d8dce4);border-top:1px solid #eef0f3"></div>
<div class="t" style="left:305px;top:649px;font-size:10.6px;color:#3c4762">PZ 00007/PR/2024</div>
<div class="a" style="left:404px;top:646px;width:400px;height:19px;background:#fff"></div>
<div class="a" style="left:803px;top:646px;width:200px;height:19px;background:#e6e6e6"></div>
<div class="t" style="left:504px;top:649px;width:97px;text-align:right;font-size:10.8px;color:#262b33">0</div>
<div class="t" style="left:604px;top:649px;width:96px;text-align:right;font-size:10.8px;color:#262b33">200,0000</div>
<div class="t" style="left:704px;top:649px;width:97px;text-align:right;font-size:10.8px;color:#262b33">1 000</div>
<div class="t" style="left:804px;top:649px;width:96px;text-align:right;font-size:10.8px;color:#262b33">200,0000</div>
<div class="t" style="left:904px;top:649px;width:97px;text-align:right;font-size:10.8px;color:#262b33">1 000</div>
<div class="a" style="left:304px;top:665px;width:100px;height:19px;background:linear-gradient(#e8ebf0,#e3e6eb 45%,#d9dde5 55%,#d8dce4);border-top:1px solid #eef0f3"></div>
<div class="t" style="left:305px;top:668px;font-size:10.6px;color:#3c4762">WZ 00006/PR/2024</div>
<div class="a" style="left:404px;top:665px;width:400px;height:19px;background:#fff"></div>
<div class="a" style="left:803px;top:665px;width:200px;height:19px;background:#e6e6e6"></div>
<div class="t" style="left:504px;top:668px;width:97px;text-align:right;font-size:10.8px;color:#262b33">0</div>
<div class="t" style="left:604px;top:668px;width:96px;text-align:right;font-size:10.8px;color:#262b33">- 1,0000</div>
<div class="t" style="left:704px;top:668px;width:97px;text-align:right;font-size:10.8px;color:#262b33">0</div>
<div class="t" style="left:804px;top:668px;width:96px;text-align:right;font-size:10.8px;color:#262b33">- 1,0000</div>
<div class="t" style="left:904px;top:668px;width:97px;text-align:right;font-size:10.8px;color:#262b33">0</div>
<div class="a" style="left:204px;top:684px;width:200px;height:19px;background:linear-gradient(#e9ecf0,#e4e7ec 45%,#dadee6 55%,#d9dde5);border-top:1px solid #eef0f3"></div>
<div class="t" style="left:206px;top:687px;font-size:10.6px;color:#3c4762">Podsuma: Dostawca 1</div>
<div class="a" style="left:404px;top:684px;width:599px;height:19px;background:#e3e3e3"></div>
<div class="t" style="left:504px;top:687px;width:97px;text-align:right;font-size:10.8px;color:#262b33">0</div>
<div class="t" style="left:604px;top:687px;width:96px;text-align:right;font-size:10.8px;color:#262b33">28 056,0000</div>
<div class="t" style="left:704px;top:687px;width:97px;text-align:right;font-size:10.8px;color:#262b33">205 070</div>
<div class="t" style="left:804px;top:687px;width:96px;text-align:right;font-size:10.8px;color:#262b33">28 056,0000</div>
<div class="t" style="left:904px;top:687px;width:97px;text-align:right;font-size:10.8px;color:#262b33">205 070</div>
<div class="a" style="left:304px;top:703px;width:100px;height:19px;background:linear-gradient(#e8ebf0,#e3e6eb 45%,#d9dde5 55%,#d8dce4);border-top:1px solid #eef0f3"></div>
<div class="t" style="left:305px;top:706px;font-size:10.6px;color:#3c4762">PW 00001/PR/2024</div>
<div class="a" style="left:404px;top:703px;width:400px;height:19px;background:#fff"></div>
<div class="a" style="left:803px;top:703px;width:200px;height:19px;background:#e6e6e6"></div>
<svg style="left:213px;top:710px" width="6" height="6" viewBox="0 0 6 6"><path d="M6 0 V6 H0 Z" fill="#4a5264"/></svg>
<div class="t" style="left:224px;top:706px;font-size:10.6px;color:#3c4762">!NIEOKREŚL...</div>
<div class="t" style="left:504px;top:706px;width:97px;text-align:right;font-size:10.8px;color:#262b33">0</div>
<div class="t" style="left:604px;top:706px;width:96px;text-align:right;font-size:10.8px;color:#262b33">13,0000</div>
<div class="t" style="left:704px;top:706px;width:97px;text-align:right;font-size:10.8px;color:#262b33">680</div>
<div class="t" style="left:804px;top:706px;width:96px;text-align:right;font-size:10.8px;color:#262b33">13,0000</div>
<div class="t" style="left:904px;top:706px;width:97px;text-align:right;font-size:10.8px;color:#262b33">680</div>
<div class="a" style="left:304px;top:722px;width:100px;height:19px;background:linear-gradient(#e8ebf0,#e3e6eb 45%,#d9dde5 55%,#d8dce4);border-top:1px solid #eef0f3"></div>
<div class="t" style="left:305px;top:725px;font-size:10.6px;color:#3c4762">PW 00002/PR/2024</div>
<div class="a" style="left:404px;top:722px;width:400px;height:19px;background:#fff"></div>
<div class="a" style="left:803px;top:722px;width:200px;height:19px;background:#e6e6e6"></div>
<div class="t" style="left:504px;top:725px;width:97px;text-align:right;font-size:10.8px;color:#262b33">0</div>
<div class="t" style="left:604px;top:725px;width:96px;text-align:right;font-size:10.8px;color:#262b33">20,0000</div>
<div class="t" style="left:704px;top:725px;width:97px;text-align:right;font-size:10.8px;color:#262b33">0,6</div>
<div class="t" style="left:804px;top:725px;width:96px;text-align:right;font-size:10.8px;color:#262b33">20,0000</div>
<div class="t" style="left:904px;top:725px;width:97px;text-align:right;font-size:10.8px;color:#262b33">0,6</div>
<div class="a" style="left:304px;top:741px;width:100px;height:19px;background:linear-gradient(#e8ebf0,#e3e6eb 45%,#d9dde5 55%,#d8dce4);border-top:1px solid #eef0f3"></div>
<div class="t" style="left:305px;top:744px;font-size:10.6px;color:#3c4762">PW 00003/PR/2024</div>
<div class="a" style="left:404px;top:741px;width:400px;height:19px;background:#fff"></div>
<div class="a" style="left:803px;top:741px;width:200px;height:19px;background:#e6e6e6"></div>
<div class="t" style="left:504px;top:744px;width:97px;text-align:right;font-size:10.8px;color:#262b33">0</div>
<div class="t" style="left:604px;top:744px;width:96px;text-align:right;font-size:10.8px;color:#262b33">20,0000</div>
<div class="t" style="left:704px;top:744px;width:97px;text-align:right;font-size:10.8px;color:#262b33">0,6</div>
<div class="t" style="left:804px;top:744px;width:96px;text-align:right;font-size:10.8px;color:#262b33">20,0000</div>
<div class="t" style="left:904px;top:744px;width:97px;text-align:right;font-size:10.8px;color:#262b33">0,6</div>
<div class="a" style="left:304px;top:760px;width:100px;height:19px;background:linear-gradient(#e8ebf0,#e3e6eb 45%,#d9dde5 55%,#d8dce4);border-top:1px solid #eef0f3"></div>
<div class="t" style="left:305px;top:763px;font-size:10.6px;color:#3c4762">RW 00001/PR/2024</div>
<div class="a" style="left:404px;top:760px;width:400px;height:19px;background:#fff"></div>
<div class="a" style="left:803px;top:760px;width:200px;height:19px;background:#e6e6e6"></div>
<div class="t" style="left:504px;top:763px;width:97px;text-align:right;font-size:10.8px;color:#262b33">0</div>
<div class="t" style="left:604px;top:763px;width:96px;text-align:right;font-size:10.8px;color:#262b33">- 181,1400</div>
<div class="t" style="left:704px;top:763px;width:97px;text-align:right;font-size:10.8px;color:#262b33">-386,5073</div>
<div class="t" style="left:804px;top:763px;width:96px;text-align:right;font-size:10.8px;color:#262b33">- 181,1400</div>
<div class="t" style="left:904px;top:763px;width:97px;text-align:right;font-size:10.8px;color:#262b33">-386,5073</div>
<div class="a" style="left:304px;top:779px;width:100px;height:19px;background:linear-gradient(#e8ebf0,#e3e6eb 45%,#d9dde5 55%,#d8dce4);border-top:1px solid #eef0f3"></div>
<div class="t" style="left:305px;top:782px;font-size:10.6px;color:#3c4762">RW 00002/PR/2024</div>
<div class="a" style="left:404px;top:779px;width:400px;height:19px;background:#fff"></div>
<div class="a" style="left:803px;top:779px;width:200px;height:19px;background:#e6e6e6"></div>
<div class="t" style="left:504px;top:782px;width:97px;text-align:right;font-size:10.8px;color:#262b33">0</div>
<div class="t" style="left:604px;top:782px;width:96px;text-align:right;font-size:10.8px;color:#262b33">- 0,1333</div>
<div class="t" style="left:704px;top:782px;width:97px;text-align:right;font-size:10.8px;color:#262b33">0</div>
<div class="t" style="left:804px;top:782px;width:96px;text-align:right;font-size:10.8px;color:#262b33">- 0,1333</div>
<div class="t" style="left:904px;top:782px;width:97px;text-align:right;font-size:10.8px;color:#262b33">0</div>
<div class="a" style="left:304px;top:798px;width:100px;height:19px;background:linear-gradient(#e8ebf0,#e3e6eb 45%,#d9dde5 55%,#d8dce4);border-top:1px solid #eef0f3"></div>
<div class="t" style="left:305px;top:801px;font-size:10.6px;color:#3c4762">RW 00003/PR/2024</div>
<div class="a" style="left:404px;top:798px;width:400px;height:19px;background:#fff"></div>
<div class="a" style="left:803px;top:798px;width:200px;height:19px;background:#e6e6e6"></div>
<div class="t" style="left:504px;top:801px;width:97px;text-align:right;font-size:10.8px;color:#262b33">0</div>
<div class="t" style="left:604px;top:801px;width:96px;text-align:right;font-size:10.8px;color:#262b33">- 0,1333</div>
<div class="t" style="left:704px;top:801px;width:97px;text-align:right;font-size:10.8px;color:#262b33">0</div>
<div class="t" style="left:804px;top:801px;width:96px;text-align:right;font-size:10.8px;color:#262b33">- 0,1333</div>
<div class="t" style="left:904px;top:801px;width:97px;text-align:right;font-size:10.8px;color:#262b33">0</div>
<div class="a" style="left:204px;top:817px;width:200px;height:19px;background:linear-gradient(#e9ecf0,#e4e7ec 45%,#dadee6 55%,#d9dde5);border-top:1px solid #eef0f3"></div>
<div class="t" style="left:206px;top:820px;font-size:10.6px;color:#3c4762">Podsuma: !NIEOKREŚLONY</div>
<div class="a" style="left:404px;top:817px;width:599px;height:19px;background:#e3e3e3"></div>
<div class="t" style="left:504px;top:820px;width:97px;text-align:right;font-size:10.8px;color:#262b33">0</div>
<div class="t" style="left:604px;top:820px;width:96px;text-align:right;font-size:10.8px;color:#262b33">- 128,4066</div>
<div class="t" style="left:704px;top:820px;width:97px;text-align:right;font-size:10.8px;color:#262b33">294,6927</div>
<div class="t" style="left:804px;top:820px;width:96px;text-align:right;font-size:10.8px;color:#262b33">- 128,4066</div>
<div class="t" style="left:904px;top:820px;width:97px;text-align:right;font-size:10.8px;color:#262b33">294,6927</div>
<div class="a" style="left:404px;top:360px;width:599px;height:1px;background:#dfe3ea"></div>
<div class="a" style="left:404px;top:379px;width:599px;height:1px;background:#dfe3ea"></div>
<div class="a" style="left:404px;top:398px;width:599px;height:1px;background:#dfe3ea"></div>
<div class="a" style="left:404px;top:417px;width:599px;height:1px;background:#dfe3ea"></div>
<div class="a" style="left:404px;top:436px;width:599px;height:1px;background:#dfe3ea"></div>
<div class="a" style="left:404px;top:455px;width:599px;height:1px;background:#dfe3ea"></div>
<div class="a" style="left:404px;top:474px;width:599px;height:1px;background:#f0f0f0"></div>
<div class="a" style="left:404px;top:493px;width:599px;height:1px;background:#dfe3ea"></div>
<div class="a" style="left:404px;top:512px;width:599px;height:1px;background:#dfe3ea"></div>
<div class="a" style="left:404px;top:531px;width:599px;height:1px;background:#f0f0f0"></div>
<div class="a" style="left:404px;top:550px;width:599px;height:1px;background:#dfe3ea"></div>
<div class="a" style="left:404px;top:569px;width:599px;height:1px;background:#dfe3ea"></div>
<div class="a" style="left:404px;top:588px;width:599px;height:1px;background:#dfe3ea"></div>
<div class="a" style="left:404px;top:607px;width:599px;height:1px;background:#f0f0f0"></div>
<div class="a" style="left:404px;top:626px;width:599px;height:1px;background:#dfe3ea"></div>
<div class="a" style="left:404px;top:645px;width:599px;height:1px;background:#dfe3ea"></div>
<div class="a" style="left:404px;top:664px;width:599px;height:1px;background:#dfe3ea"></div>
<div class="a" style="left:404px;top:683px;width:599px;height:1px;background:#dfe3ea"></div>
<div class="a" style="left:404px;top:702px;width:599px;height:1px;background:#f0f0f0"></div>
<div class="a" style="left:404px;top:721px;width:599px;height:1px;background:#dfe3ea"></div>
<div class="a" style="left:404px;top:740px;width:599px;height:1px;background:#dfe3ea"></div>
<div class="a" style="left:404px;top:759px;width:599px;height:1px;background:#dfe3ea"></div>
<div class="a" style="left:404px;top:778px;width:599px;height:1px;background:#dfe3ea"></div>
<div class="a" style="left:404px;top:797px;width:599px;height:1px;background:#dfe3ea"></div>
<div class="a" style="left:404px;top:816px;width:599px;height:1px;background:#dfe3ea"></div>
<div class="a" style="left:404px;top:835px;width:599px;height:1px;background:#f0f0f0"></div>
<div class="a" style="left:503px;top:342px;width:1px;height:494px;background:#dde2ea"></div>
<div class="a" style="left:603px;top:342px;width:1px;height:494px;background:#dde2ea"></div>
<div class="a" style="left:703px;top:342px;width:1px;height:494px;background:#dde2ea"></div>
<div class="a" style="left:803px;top:342px;width:1px;height:494px;background:#dde2ea"></div>
<div class="a" style="left:903px;top:342px;width:1px;height:494px;background:#dde2ea"></div>
<div class="chip" style="left:207px;top:228px;width:100px"><div class="t" style="left:0px;top:2px;width:82px;overflow:hidden;font-size:10.8px;color:#3a4662">Typ dokumentu</div></div>
<div class="dd" style="left:291px;top:231px"></div>
<div class="chip" style="left:207px;top:261px;width:114px"><div class="t" style="left:0px;top:2px;width:95px;overflow:hidden;font-size:10.8px;color:#3a4662">Ilość w bazowej jm</div></div>
<div class="dd" style="left:304px;top:264px"></div>
<div class="chip" style="left:324px;top:261px;width:65px"><div class="t" style="left:0px;top:2px;width:45px;overflow:hidden;font-size:10.8px;color:#3a4662">Wartość</div></div>
<div class="dd" style="left:371px;top:264px"></div>
<div class="chip" style="left:207px;top:319px;width:95px"><div class="t" style="left:0px;top:2px;width:59px;overflow:hidden;font-size:10.8px;color:#3a4662">Kontrahent</div></div>
<svg style="left:268px;top:325px" width="9" height="5" viewBox="0 0 9 5"><path d="M0 0 H9 L4.5 5 Z" fill="#a3aab6"/></svg>
<div class="dd" style="left:284px;top:322px"></div>
<div class="chip" style="left:304px;top:319px;width:97px"><div class="t" style="left:0px;top:2px;width:63px;overflow:hidden;font-size:10.8px;color:#3a4662">Numer dokumentu</div></div>
<svg style="left:369px;top:325px" width="9" height="5" viewBox="0 0 9 5"><path d="M0 5 L4.5 0 L9 5 Z" fill="#a3aab6"/></svg>
<div class="dd" style="left:384px;top:322px"></div>
<div class="chip" style="left:405px;top:261px;width:141px"><div class="t" style="left:0px;top:2px;width:106px;overflow:hidden;font-size:10.8px;color:#3a4662">Data ewidencji (Rok)</div></div>
<svg style="left:513px;top:267px" width="9" height="5" viewBox="0 0 9 5"><path d="M0 5 L4.5 0 L9 5 Z" fill="#a3aab6"/></svg>
<div class="dd" style="left:529px;top:264px"></div>
<div class="chip" style="left:549px;top:261px;width:158px"><div class="t" style="left:0px;top:2px;width:123px;overflow:hidden;font-size:10.8px;color:#3a4662">Data ewidencji (Miesiąc)</div></div>
<svg style="left:674px;top:267px" width="9" height="5" viewBox="0 0 9 5"><path d="M0 5 L4.5 0 L9 5 Z" fill="#a3aab6"/></svg>
<div class="dd" style="left:689px;top:264px"></div>
<div class="rbox" style="left:201px;top:225px;width:109px;height:23px"></div>
<div class="rbox" style="left:201px;top:258px;width:190px;height:22px"></div>
<div class="rbox" style="left:201px;top:316px;width:204px;height:24px"></div>
<div class="rbox" style="left:403px;top:258px;width:309px;height:22px"></div>
<div class="a" style="left:202px;top:837px;width:1013px;height:4px;background:#c3cddb"></div>
<div class="a" style="left:202px;top:841px;width:1013px;height:4px;background:#fde6a5;border-radius:0 0 3px 3px"></div>
<div class="a" style="left:200px;top:845px;width:1017px;height:1px;background:#8f9db3"></div>
<div class="a" style="left:200px;top:846px;width:1017px;height:5px;background:#fde6a5;border-radius:0 0 3px 3px"></div>
<div class="a" style="left:200px;top:851px;width:1017px;height:1px;background:#a3afc0"></div>
<svg style="left:698px;top:837px" width="16" height="3" viewBox="0 0 16 3"><g fill="#8a96aa"><rect x="0" y="0" width="2" height="2"/><rect x="4" y="0" width="2" height="2"/><rect x="8" y="0" width="2" height="2"/><rect x="12" y="0" width="2" height="2"/></g></svg>
<svg style="left:195px;top:443px" width="3" height="16" viewBox="0 0 3 16"><g fill="#8a96aa"><rect x="0" y="0" width="2" height="2"/><rect x="0" y="4" width="2" height="2"/><rect x="0" y="8" width="2" height="2"/><rect x="0" y="12" width="2" height="2"/></g></svg>
<!-- popup -->
<div class="a" style="left:1009px;top:206px;width:200px;height:627px;background:#1d2433"></div>
<div class="a" style="left:1011px;top:208px;width:196px;height:623px;background:linear-gradient(#f2f4f7 0,#f2f4f7 1px,#a6b2c5 2px,#c6cfdc 24px,#c6cfdc 26px,#bfc9d7 27px);border-left:1px solid #b0bccd;border-right:1px solid #b0bccd"></div>
<div class="t" style="left:1023px;top:215px;font-size:12px;line-height:14px;height:14px;color:#0c0e1c">Dostosuj widok</div>
<div class="a" style="left:1166px;top:214px;width:35px;height:18px;border:1px solid #4a1a1e;border-radius:3px;background:linear-gradient(#f0b0a0 0,#e8a090 10%,#dc8c7a 45%,#bc4428 52%,#c85a40 80%,#e49080 100%);box-shadow:inset 0 0 0 1px rgba(255,220,210,.6)"></div>
<svg style="left:1178px;top:218px" width="12" height="10" viewBox="0 0 12 10"><path d="M2 1.5 L10 8.5 M10 1.5 L2 8.5" stroke="#3a3a4a" stroke-width="3.6" stroke-linecap="round"/><path d="M2 1.5 L10 8.5 M10 1.5 L2 8.5" stroke="#fff" stroke-width="2.2" stroke-linecap="round"/></svg>
<div class="a" style="left:1017px;top:234px;width:184px;height:592px;background:#bfc9d7;border:1px solid #c8d0dc;border-radius:2px"></div>
<div class="t" style="left:1027px;top:247px;font-size:10.4px;color:#0c0e1c">Przeciągnij pola</div>
<div class="a" style="left:1028px;top:265px;width:162px;height:518px;background:#fff;border:1px solid #aab3c0"></div>
<div class="a" style="left:1029px;top:266px;width:160px;height:19px;border:1px solid #b8c0cc;border-left:2px solid #aeb7c4;background:linear-gradient(#eef0f4,#e2e5eb 50%,#d6dbe3 51%,#dde1e8)"></div>
<div class="t" style="left:1031px;top:270px;width:139px;overflow:hidden;font-size:10.85px;color:#3a4662">Data ewidencji (Kwartał)</div>
<div class="dd" style="left:1171px;top:269px"></div>
<div class="a" style="left:1029px;top:285px;width:160px;height:19px;border:1px solid #b8c0cc;border-left:2px solid #aeb7c4;background:linear-gradient(#eef0f4,#e2e5eb 50%,#d6dbe3 51%,#dde1e8)"></div>
<div class="t" style="left:1031px;top:289px;width:139px;overflow:hidden;font-size:10.85px;color:#3a4662">Data ewidencji (Tydzień)</div>
<div class="dd" style="left:1171px;top:288px"></div>
<div class="a" style="left:1029px;top:304px;width:160px;height:19px;border:1px solid #b8c0cc;border-left:2px solid #aeb7c4;background:linear-gradient(#eef0f4,#e2e5eb 50%,#d6dbe3 51%,#dde1e8)"></div>
<div class="t" style="left:1031px;top:308px;width:139px;overflow:hidden;font-size:10.85px;color:#3a4662">Data ewidencji (Dzień)</div>
<div class="dd" style="left:1171px;top:307px"></div>
<div class="a" style="left:1029px;top:323px;width:160px;height:19px;border:1px solid #b8c0cc;border-left:2px solid #aeb7c4;background:linear-gradient(#eef0f4,#e2e5eb 50%,#d6dbe3 51%,#dde1e8)"></div>
<div class="t" style="left:1031px;top:327px;width:139px;overflow:hidden;font-size:10.85px;color:#3a4662">Kierunek</div>
<div class="dd" style="left:1171px;top:326px"></div>
<div class="a" style="left:1029px;top:342px;width:160px;height:19px;border:1px solid #b8c0cc;border-left:2px solid #aeb7c4;background:linear-gradient(#eef0f4,#e2e5eb 50%,#d6dbe3 51%,#dde1e8)"></div>
<div class="t" style="left:1031px;top:346px;width:139px;overflow:hidden;font-size:10.85px;color:#3a4662">Seria</div>
<div class="dd" style="left:1171px;top:345px"></div>
<div class="a" style="left:1029px;top:361px;width:160px;height:19px;border:1px solid #b8c0cc;border-left:2px solid #aeb7c4;background:linear-gradient(#eef0f4,#e2e5eb 50%,#d6dbe3 51%,#dde1e8)"></div>
<div class="t" style="left:1031px;top:365px;width:139px;overflow:hidden;font-size:10.85px;color:#3a4662">Asortyment</div>
<div class="dd" style="left:1171px;top:364px"></div>
<div class="a" style="left:1029px;top:380px;width:160px;height:19px;border:1px solid #b8c0cc;border-left:2px solid #aeb7c4;background:linear-gradient(#eef0f4,#e2e5eb 50%,#d6dbe3 51%,#dde1e8)"></div>
<div class="t" style="left:1031px;top:384px;width:139px;overflow:hidden;font-size:10.85px;color:#3a4662">Nazwa</div>
<div class="dd" style="left:1171px;top:383px"></div>
<div class="a" style="left:1029px;top:399px;width:160px;height:19px;border:1px solid #b8c0cc;border-left:2px solid #aeb7c4;background:linear-gradient(#eef0f4,#e2e5eb 50%,#d6dbe3 51%,#dde1e8)"></div>
<div class="t" style="left:1031px;top:403px;width:139px;overflow:hidden;font-size:10.85px;color:#3a4662">Opis</div>
<div class="dd" style="left:1171px;top:402px"></div>
<div class="a" style="left:1029px;top:418px;width:160px;height:19px;border:1px solid #b8c0cc;border-left:2px solid #aeb7c4;background:linear-gradient(#eef0f4,#e2e5eb 50%,#d6dbe3 51%,#dde1e8)"></div>
<div class="t" style="left:1031px;top:422px;width:139px;overflow:hidden;font-size:10.85px;color:#3a4662">Grupa magazynowa</div>
<div class="dd" style="left:1171px;top:421px"></div>
<div class="a" style="left:1029px;top:437px;width:160px;height:19px;border:1px solid #b8c0cc;border-left:2px solid #aeb7c4;background:linear-gradient(#eef0f4,#e2e5eb 50%,#d6dbe3 51%,#dde1e8)"></div>
<div class="t" style="left:1031px;top:441px;width:139px;overflow:hidden;font-size:10.85px;color:#3a4662">Jm bazowa</div>
<div class="dd" style="left:1171px;top:440px"></div>
<div class="a" style="left:1029px;top:456px;width:160px;height:19px;border:1px solid #b8c0cc;border-left:2px solid #aeb7c4;background:linear-gradient(#eef0f4,#e2e5eb 50%,#d6dbe3 51%,#dde1e8)"></div>
<div class="t" style="left:1031px;top:460px;width:139px;overflow:hidden;font-size:10.85px;color:#3a4662">Magazyn</div>
<div class="dd" style="left:1171px;top:459px"></div>
<div class="a" style="left:1029px;top:475px;width:160px;height:19px;border:1px solid #b8c0cc;border-left:2px solid #aeb7c4;background:linear-gradient(#eef0f4,#e2e5eb 50%,#d6dbe3 51%,#dde1e8)"></div>
<div class="t" style="left:1031px;top:479px;width:139px;overflow:hidden;font-size:10.85px;color:#3a4662">Sygnatura magazynu</div>
<div class="dd" style="left:1171px;top:478px"></div>
<div class="a" style="left:1029px;top:494px;width:160px;height:19px;border:1px solid #b8c0cc;border-left:2px solid #aeb7c4;background:linear-gradient(#eef0f4,#e2e5eb 50%,#d6dbe3 51%,#dde1e8)"></div>
<div class="t" style="left:1031px;top:498px;width:139px;overflow:hidden;font-size:10.85px;color:#3a4662">Ilość w bazowej jm - trend</div>
<div class="dd" style="left:1171px;top:497px"></div>
<div class="a" style="left:1029px;top:513px;width:160px;height:19px;border:1px solid #b8c0cc;border-left:2px solid #aeb7c4;background:linear-gradient(#eef0f4,#e2e5eb 50%,#d6dbe3 51%,#dde1e8)"></div>
<div class="t" style="left:1031px;top:517px;width:139px;overflow:hidden;font-size:10.85px;color:#3a4662">Wartość - trend</div>
<div class="dd" style="left:1171px;top:516px"></div>
<div class="a" style="left:1029px;top:532px;width:160px;height:19px;border:1px solid #b8c0cc;border-left:2px solid #aeb7c4;background:linear-gradient(#eef0f4,#e2e5eb 50%,#d6dbe3 51%,#dde1e8)"></div>
<div class="t" style="left:1031px;top:536px;width:139px;overflow:hidden;font-size:10.85px;color:#3a4662">Etykieta</div>
<div class="dd" style="left:1171px;top:535px"></div>
<div class="a" style="left:1029px;top:551px;width:160px;height:19px;border:1px solid #b8c0cc;border-left:2px solid #aeb7c4;background:linear-gradient(#eef0f4,#e2e5eb 50%,#d6dbe3 51%,#dde1e8)"></div>
<div class="t" style="left:1031px;top:555px;width:139px;overflow:hidden;font-size:10.85px;color:#3a4662">Typ asortymentu</div>
<div class="dd" style="left:1171px;top:554px"></div>
<div class="a" style="left:1029px;top:570px;width:160px;height:19px;border:1px solid #b8c0cc;border-left:2px solid #aeb7c4;background:linear-gradient(#eef0f4,#e2e5eb 50%,#d6dbe3 51%,#dde1e8)"></div>
<div class="t" style="left:1031px;top:574px;width:139px;overflow:hidden;font-size:10.85px;color:#3a4662">Cena zakupu PLN bazowej jm</div>
<div class="dd" style="left:1171px;top:573px"></div>
<div class="a" style="left:1029px;top:589px;width:160px;height:19px;border:1px solid #b8c0cc;border-left:2px solid #aeb7c4;background:linear-gradient(#eef0f4,#e2e5eb 50%,#d6dbe3 51%,#dde1e8)"></div>
<div class="t" style="left:1031px;top:593px;width:139px;overflow:hidden;font-size:10.85px;color:#3a4662">Projekt</div>
<div class="dd" style="left:1171px;top:592px"></div>
<div class="a" style="left:1029px;top:608px;width:160px;height:19px;border:1px solid #b8c0cc;border-left:2px solid #aeb7c4;background:linear-gradient(#eef0f4,#e2e5eb 50%,#d6dbe3 51%,#dde1e8)"></div>
<div class="t" style="left:1031px;top:612px;width:139px;overflow:hidden;font-size:10.85px;color:#3a4662">Etap</div>
<div class="dd" style="left:1171px;top:611px"></div>
<div class="a" style="left:1029px;top:627px;width:160px;height:19px;border:1px solid #b8c0cc;border-left:2px solid #aeb7c4;background:linear-gradient(#eef0f4,#e2e5eb 50%,#d6dbe3 51%,#dde1e8)"></div>
<div class="t" style="left:1031px;top:631px;width:139px;overflow:hidden;font-size:10.85px;color:#3a4662">Lista partii</div>
<div class="dd" style="left:1171px;top:630px"></div>
<div class="a" style="left:1029px;top:646px;width:160px;height:19px;border:1px solid #b8c0cc;border-left:2px solid #aeb7c4;background:linear-gradient(#eef0f4,#e2e5eb 50%,#d6dbe3 51%,#dde1e8)"></div>
<div class="t" style="left:1031px;top:650px;width:139px;overflow:hidden;font-size:10.85px;color:#3a4662">Kod pracownika</div>
<div class="dd" style="left:1171px;top:649px"></div>
<div class="a" style="left:1029px;top:665px;width:160px;height:19px;border:1px solid #b8c0cc;border-left:2px solid #aeb7c4;background:linear-gradient(#eef0f4,#e2e5eb 50%,#d6dbe3 51%,#dde1e8)"></div>
<div class="t" style="left:1031px;top:669px;width:139px;overflow:hidden;font-size:10.85px;color:#3a4662">MPK</div>
<div class="dd" style="left:1171px;top:668px"></div>
<div class="a" style="left:1029px;top:684px;width:160px;height:19px;border:1px solid #b8c0cc;border-left:2px solid #aeb7c4;background:linear-gradient(#eef0f4,#e2e5eb 50%,#d6dbe3 51%,#dde1e8)"></div>
<div class="t" style="left:1031px;top:688px;width:139px;overflow:hidden;font-size:10.85px;color:#3a4662">Masa netto</div>
<div class="dd" style="left:1171px;top:687px"></div>
<div class="a" style="left:1029px;top:703px;width:160px;height:19px;border:1px solid #b8c0cc;border-left:2px solid #aeb7c4;background:linear-gradient(#eef0f4,#e2e5eb 50%,#d6dbe3 51%,#dde1e8)"></div>
<div class="t" style="left:1031px;top:707px;width:139px;overflow:hidden;font-size:10.85px;color:#3a4662">Data ewidencji</div>
<div class="dd" style="left:1171px;top:706px"></div>
<div class="a" style="left:1029px;top:722px;width:160px;height:19px;border:1px solid #b8c0cc;border-left:2px solid #aeb7c4;background:linear-gradient(#eef0f4,#e2e5eb 50%,#d6dbe3 51%,#dde1e8)"></div>
<div class="t" style="left:1031px;top:726px;width:139px;overflow:hidden;font-size:10.85px;color:#3a4662">Data wystawienia</div>
<div class="dd" style="left:1171px;top:725px"></div>
<div class="a" style="left:1031px;top:792px;width:73px;height:20px;border:1px solid #a9b1bd;border-radius:3px;background:linear-gradient(#e6e9ee,#d8dde4 50%,#cdd3dc 51%,#d3d8e0)"></div>
<div class="t" style="left:1031px;top:796px;width:73px;text-align:center;color:#9aa2b0">Dodaj do</div>
<div class="a" style="left:1112px;top:792px;width:75px;height:19px;border:1px solid #aab2be;background:#d8dde5"></div>
<div class="t" style="left:1114px;top:796px;color:#111">Kolumny</div>
<svg style="left:1173px;top:800px" width="8" height="4" viewBox="0 0 8 4"><path d="M0 0 H8 L4 4 Z" fill="#a0a8b4"/></svg>
<div class="rbox" style="left:1009px;top:205px;width:200px;height:627px;border-radius:6px"></div>
<div class="rbox" style="left:1028px;top:361px;width:161px;height:20px"></div>
<!-- callouts & arrows -->
<svg style="left:0;top:0" width="1225" height="877" viewBox="0 0 1225 877">
<defs>
<filter id="sh" x="-20%" y="-30%" width="140%" height="160%"><feGaussianBlur in="SourceAlpha" stdDeviation="2"/><feOffset dx="1.5" dy="2"/><feComponentTransfer><feFuncA type="linear" slope="0.45"/></feComponentTransfer><feMerge><feMergeNode/><feMergeNode in="SourceGraphic"/></feMerge></filter>
</defs>
<g filter="url(#sh)" fill="#ff0000" stroke="#8a7a7a" stroke-width="0.6">
<path d="M28 242.7 H157.4 Q171.4 242.7 171.4 256.7 L171.4 255.6 L199.7 270 L171.4 266.7 V265.6 Q171.4 279.6 157.4 279.6 H28 Q14 279.6 14 265.6 V256.7 Q14 242.7 28 242.7 Z"/>
<path d="M32.5 302.7 H157.4 Q171.4 302.7 171.4 316.7 L171.4 314.7 L199.7 328.4 L171.4 326.7 V325.6 Q171.4 339.6 157.4 339.6 H32.5 Q18.5 339.6 18.5 325.6 V316.7 Q18.5 302.7 32.5 302.7 Z"/>
<path d="M405.2 189 H594 Q608 189 608 203 V216 Q608 230 594 230 H405.2 Q391.2 230 391.2 216 V216.4 L311.3 234.5 L391.2 203 V203 Q391.2 189 405.2 189 Z"/>
<path d="M649 188.7 H746.2 Q760.2 188.7 760.2 202.7 V215.7 Q760.2 229.7 746.2 229.7 H681.2 L640.2 256 L661.6 229.7 H649 Q635 229.7 635 215.7 V202.7 Q635 188.7 649 188.7 Z"/>
</g>
<g font-family="Liberation Sans" font-size="19.2" fill="#fff" text-anchor="middle">
<text x="92.7" y="267.8">Pola danych</text>
<text x="94.5" y="327.8">Wiersze</text>
<text x="498.3" y="214.9">Pola filtrujące</text>
<text x="697.4" y="214.7">Kolumny</text>
</g>
<!-- Widok red box -->
<rect x="1076.6" y="104.8" width="39.6" height="83.2" rx="5" fill="none" stroke="#ff1010" stroke-width="2"/>
<!-- arrow 1 -->
<g filter="url(#sh)">
<path d="M1076 170.3 L1058 197" stroke="#ff0000" stroke-width="3" fill="none"/>
<path d="M1052.9 204.5 L1054.7 193.5 L1062.5 198.6 Z" fill="#ff0000"/>
<!-- arrow 2 -->
<path d="M1021.3 367.2 L562 306" stroke="#ff0000" stroke-width="5" fill="none"/>
<path d="M539.8 303.5 L564 298.8 L562.6 314.5 Z" fill="#ff0000"/>
</g>
<!-- badges -->
<g filter="url(#sh)">
<circle cx="1095.6" cy="184.6" r="13.9" fill="#d42020" fill-opacity="0.88" stroke="#ff1c1c" stroke-width="1.6"/>
<circle cx="1014.7" cy="386.6" r="13.9" fill="#d42020" fill-opacity="0.88" stroke="#ff1c1c" stroke-width="1.6"/>
</g>
<g font-family="Liberation Sans" font-size="15" fill="#fff" text-anchor="middle">
<text x="1095.6" y="189.8">1</text>
<text x="1014.7" y="392.2">2</text>
</g>
</svg>
</body></html>
